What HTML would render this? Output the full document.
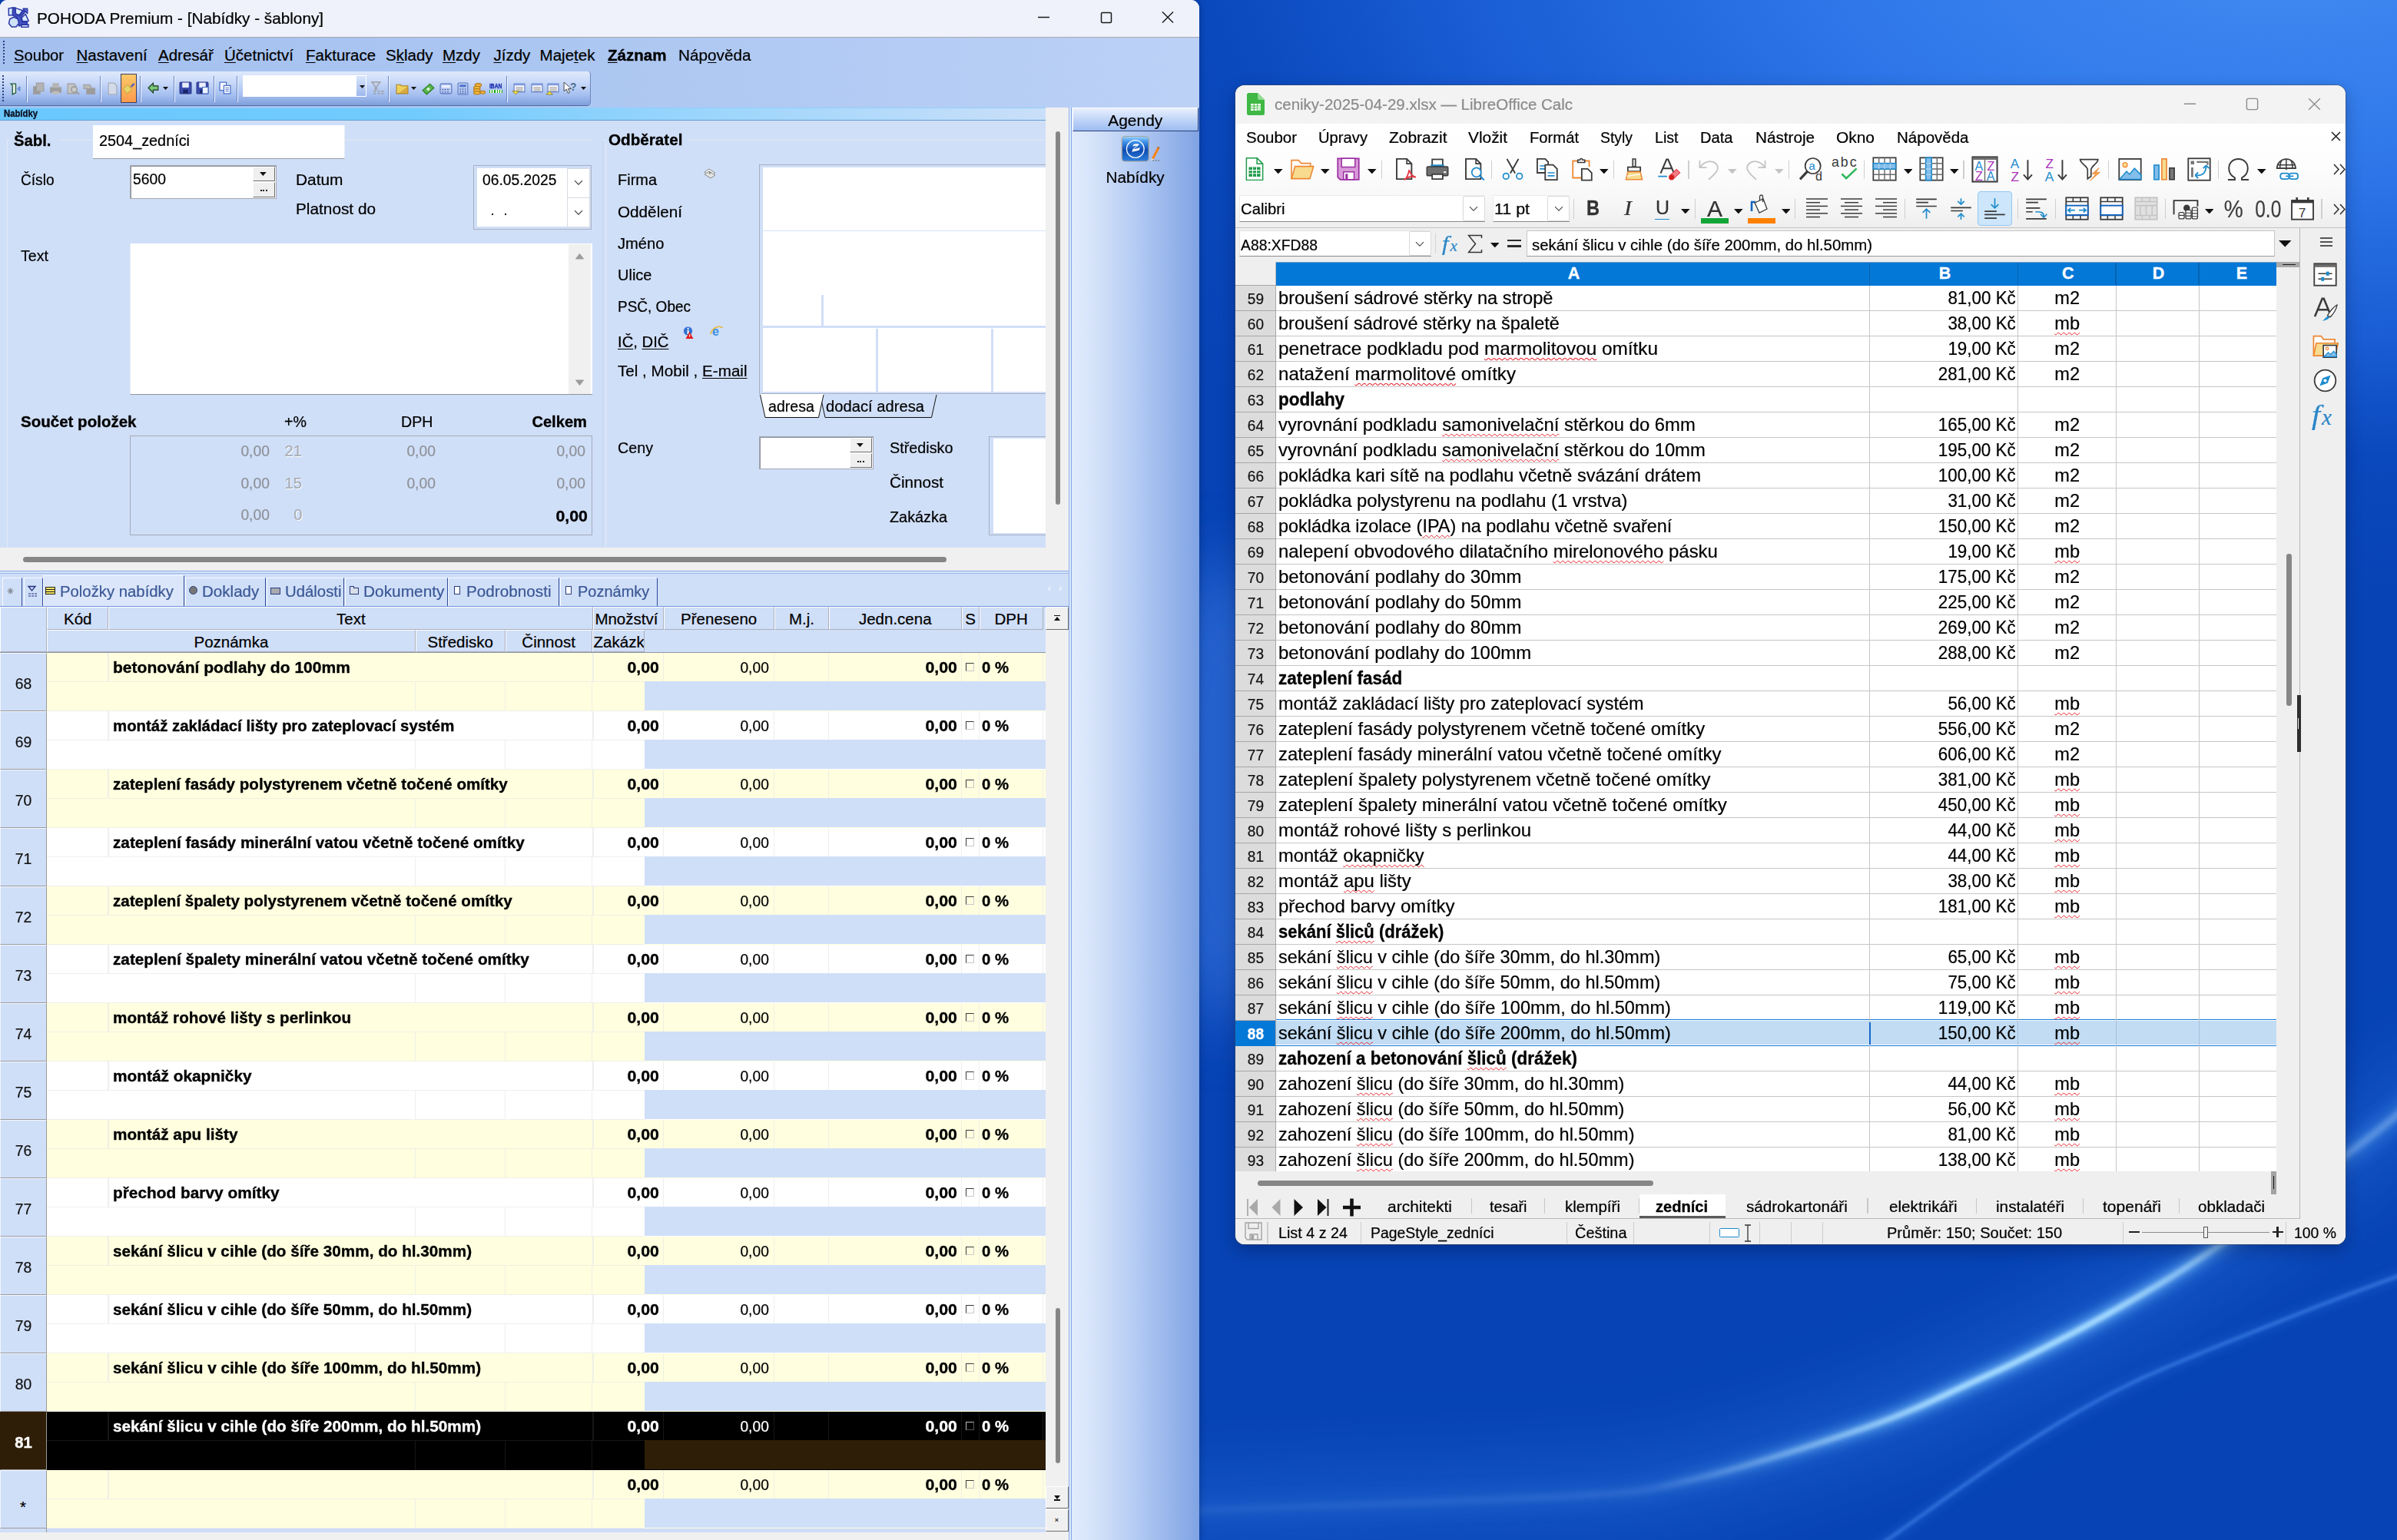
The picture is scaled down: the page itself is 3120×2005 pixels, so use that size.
<!DOCTYPE html><html><head><meta charset="utf-8"><title>screen</title><style>
*{box-sizing:border-box;margin:0;padding:0}
html,body{width:3120px;height:2005px;overflow:hidden}
body{font-family:"Liberation Sans",sans-serif;position:relative;background:#0845b6}
div,span.t,svg{position:absolute}
span.t{white-space:pre;display:block;-webkit-text-stroke:.22px}
.wv{text-decoration:underline wavy #e8202a;text-decoration-thickness:1px;text-underline-offset:3px;text-decoration-skip-ink:none}
u{text-decoration:underline;text-underline-offset:2px;text-decoration-thickness:1.2px}
</style></head><body>
<svg width="3120" height="2005" viewBox="0 0 3120 2005" style="left:0;top:0">
<defs>
<linearGradient id="wg" x1="0" y1="1" x2="1" y2="0" gradientUnits="objectBoundingBox">
<stop offset="0" stop-color="#053fb0"/><stop offset="0.45" stop-color="#0744b6"/><stop offset="0.75" stop-color="#1558cf"/><stop offset="1" stop-color="#3079e8"/></linearGradient>
<filter id="b1" x="-20%" y="-50%" width="140%" height="200%"><feGaussianBlur stdDeviation="12"/></filter>
<filter id="b2" x="-20%" y="-50%" width="140%" height="200%"><feGaussianBlur stdDeviation="4"/></filter>
<filter id="b3" x="-20%" y="-50%" width="140%" height="200%"><feGaussianBlur stdDeviation="45"/></filter>
<linearGradient id="fd" gradientUnits="userSpaceOnUse" x1="1560" y1="0" x2="3120" y2="0"><stop offset="0" stop-color="#fff" stop-opacity=".2"/><stop offset=".35" stop-color="#fff" stop-opacity=".32"/><stop offset=".62" stop-color="#fff" stop-opacity=".85"/><stop offset="1" stop-color="#fff" stop-opacity=".9"/></linearGradient>
<mask id="mk" maskUnits="userSpaceOnUse" x="1500" y="0" width="1620" height="2005"><rect x="1500" y="0" width="1620" height="2005" fill="url(#fd)"/></mask>
<radialGradient id="rg" gradientUnits="userSpaceOnUse" cx="0" cy="0" r="1" gradientTransform="translate(2980 -60) scale(1850 860)">
<stop offset="0" stop-color="#428bf1"/><stop offset=".3" stop-color="#3079eb"/><stop offset=".58" stop-color="#1a5dd4"/><stop offset=".76" stop-color="#0a48bd"/><stop offset="1" stop-color="#0743b5"/></radialGradient>
<linearGradient id="fd2" gradientUnits="userSpaceOnUse" x1="2150" y1="0" x2="3000" y2="0"><stop offset="0" stop-color="#fff" stop-opacity="0"/><stop offset=".45" stop-color="#fff" stop-opacity="1"/><stop offset=".7" stop-color="#fff" stop-opacity="1"/><stop offset="1" stop-color="#fff" stop-opacity="0"/></linearGradient>
<mask id="mk2" maskUnits="userSpaceOnUse" x="1500" y="0" width="1620" height="2005"><rect x="1500" y="0" width="1620" height="2005" fill="url(#fd2)"/></mask>
<filter id="b4" x="-20%" y="-50%" width="140%" height="200%"><feGaussianBlur stdDeviation="2"/></filter>
<filter id="b5" x="-20%" y="-50%" width="140%" height="200%"><feGaussianBlur stdDeviation="7"/></filter>
</defs>
<rect x="1500" y="0" width="1620" height="2005" fill="#0743b5"/>
<rect x="1500" y="0" width="1620" height="1100" fill="url(#rg)"/>
<ellipse cx="1600" cy="1030" rx="130" ry="300" fill="#2d6cd6" opacity="0.75" filter="url(#b3)"/>
<path d="M1400 1972 C1428 1971 1460 1970 1567 1966 C1674 1962 1934 1954 2040 1948 C2146 1942 2135 1942 2200 1927 C2265 1912 2366 1880 2430 1858 C2494 1836 2539 1812 2584 1792 C2629 1772 2661 1755 2699 1735 C2737 1715 2782 1689 2814 1670 C2846 1651 2867 1636 2891 1620 C2915 1604 2928 1595 2960 1572 C2992 1549 3045 1511 3085 1480 C3125 1449 3181 1401 3200 1385" stroke="#2f7ae8" stroke-width="100" fill="none" opacity="0.33" filter="url(#b3)"/>
<g mask="url(#mk)"><path d="M1400 1972 C1428 1971 1460 1970 1567 1966 C1674 1962 1934 1954 2040 1948 C2146 1942 2135 1942 2200 1927 C2265 1912 2366 1880 2430 1858 C2494 1836 2539 1812 2584 1792 C2629 1772 2661 1755 2699 1735 C2737 1715 2782 1689 2814 1670 C2846 1651 2867 1636 2891 1620 C2915 1604 2928 1595 2960 1572 C2992 1549 3045 1511 3085 1480 C3125 1449 3181 1401 3200 1385" stroke="#5aa2f5" stroke-width="16" fill="none" opacity="0.7" filter="url(#b1)"/>
<path d="M1400 1972 C1428 1971 1460 1970 1567 1966 C1674 1962 1934 1954 2040 1948 C2146 1942 2135 1942 2200 1927 C2265 1912 2366 1880 2430 1858 C2494 1836 2539 1812 2584 1792 C2629 1772 2661 1755 2699 1735 C2737 1715 2782 1689 2814 1670 C2846 1651 2867 1636 2891 1620 C2915 1604 2928 1595 2960 1572 C2992 1549 3045 1511 3085 1480 C3125 1449 3181 1401 3200 1385" stroke="#b4dbff" stroke-width="4.500" fill="none" opacity="0.9" filter="url(#b2)"/></g>
<path d="M2400 2045 C2412 2037 2432 2022 2469 1996 C2506 1970 2571 1922 2622 1889 C2673 1856 2718 1828 2776 1800 C2834 1772 2911 1743 2968 1720 C3025 1697 3081 1676 3120 1662 C3159 1648 3187 1639 3200 1634" stroke="#3f86f0" stroke-width="8" fill="none" opacity="0.35" filter="url(#b5)"/>
<path d="M2400 2045 C2412 2037 2432 2022 2469 1996 C2506 1970 2571 1922 2622 1889 C2673 1856 2718 1828 2776 1800 C2834 1772 2911 1743 2968 1720 C3025 1697 3081 1676 3120 1662 C3159 1648 3187 1639 3200 1634" stroke="#4a8df2" stroke-width="3" fill="none" opacity="0.85" filter="url(#b4)"/>
<g mask="url(#mk2)"><path d="M1400 1972 C1428 1971 1460 1970 1567 1966 C1674 1962 1934 1954 2040 1948 C2146 1942 2135 1942 2200 1927 C2265 1912 2366 1880 2430 1858 C2494 1836 2539 1812 2584 1792 C2629 1772 2661 1755 2699 1735 C2737 1715 2782 1689 2814 1670 C2846 1651 2867 1636 2891 1620 C2915 1604 2928 1595 2960 1572 C2992 1549 3045 1511 3085 1480 C3125 1449 3181 1401 3200 1385" stroke="#6ab4fb" stroke-width="16" fill="none" opacity="0.7" filter="url(#b5)"/><path d="M1400 1972 C1428 1971 1460 1970 1567 1966 C1674 1962 1934 1954 2040 1948 C2146 1942 2135 1942 2200 1927 C2265 1912 2366 1880 2430 1858 C2494 1836 2539 1812 2584 1792 C2629 1772 2661 1755 2699 1735 C2737 1715 2782 1689 2814 1670 C2846 1651 2867 1636 2891 1620 C2915 1604 2928 1595 2960 1572 C2992 1549 3045 1511 3085 1480 C3125 1449 3181 1401 3200 1385" stroke="#a6dcff" stroke-width="7" fill="none" opacity="0.95" filter="url(#b4)"/></g>
</svg>
<div id="pohoda" style="left:0;top:0;width:1561px;height:2005px;background:#d0dff8;border-radius:9px 11px 0 0;overflow:hidden;box-shadow:0 0 10px rgba(0,0,20,.3)">
<div style="left:0px;top:0px;width:1561px;height:48px;background:#eff2fa;"></div>
<div style="left:0px;top:48px;width:1561px;height:1px;background:#a6a8ae;"></div>
<svg style="left:9.900px;top:8.600px" width="28" height="27.500" viewBox="0 0 28 27.5">
<path d="M6.500 1h3.500l.8 8.500 4.500 2 5-7 3.500.5-6.500 8 1.500 6.500h6.500v3.200l-7.500.3-3 2L11.500 13 6.500 11z" fill="#4755c2" stroke="#2a38a6" stroke-width="1.600" stroke-linejoin="round"/>
<path d="M20 2.200h5.700v6.300z" fill="#6b76d2" stroke="#2a38a6" stroke-width="1.500" stroke-linejoin="round"/>
<g stroke="#2a38a6" stroke-width="1.500" stroke-linejoin="round">
<path d="M1.200 2L6.600 1.100 6.300 10.400 1.400 11z" fill="#d6e9fc"/>
<path d="M10 1.400L19.600 4.700 14.900 10.600 10.500 9z" fill="#dff0fd"/>
<path d="M23.300 9.300L27.200 18.400 19.300 18.700 18.100 14.200z" fill="#d6e9fc"/>
<polygon points="8.0,13.3 13.2,15.8 14.5,21.5 10.9,26.0 5.1,26.0 1.5,21.5 2.8,15.8" fill="#cfe2fb"/>
<path d="M18.300 23.200L27.200 22.900 26.900 26.200H17.600z" fill="#dff0fd"/>
</g></svg>
<span class="t" style="top:14.35px;font-size:20.5px;line-height:20.5px;left:48.4px;transform:scaleX(1.0106);transform-origin:0 0;">POHODA Premium - [Nabídky - šablony]</span>
<svg style="left:1340px;top:0" width="221" height="48" viewBox="0 0 221 48" fill="none" stroke="#1a1a1a" stroke-width="1.5">
<path d="M11 22.5h15"/><rect x="93.5" y="16.5" width="13" height="13" rx="1.5"/><path d="M173 15.5l14 14M187 15.5l-14 14"/></svg>
<div style="left:0px;top:49px;width:1561px;height:91px;background:linear-gradient(90deg,#a4c0ef 0%,#abc6f1 45%,#bcd1f6 100%);"></div>
<div style="left:4px;top:53px;width:2px;height:31px;background-image:repeating-linear-gradient(180deg,#2a3f78 0 2px,transparent 2px 4px);"></div>
<span class="t" style="top:62.05px;font-size:20.5px;line-height:20.5px;left:18.4px;transform:scaleX(0.9834);transform-origin:0 0;"><u>S</u>oubor</span>
<span class="t" style="top:62.05px;font-size:20.5px;line-height:20.5px;left:99.5px;transform:scaleX(1.0);transform-origin:0 0;"><u>N</u>astavení</span>
<span class="t" style="top:62.05px;font-size:20.5px;line-height:20.5px;left:206px;transform:scaleX(1.0);transform-origin:0 0;"><u>A</u>dresář</span>
<span class="t" style="top:62.05px;font-size:20.5px;line-height:20.5px;left:292px;transform:scaleX(1.0);transform-origin:0 0;"><u>Ú</u>četnictví</span>
<span class="t" style="top:62.05px;font-size:20.5px;line-height:20.5px;left:398px;transform:scaleX(1.0);transform-origin:0 0;"><u>F</u>akturace</span>
<span class="t" style="top:62.05px;font-size:20.5px;line-height:20.5px;left:502px;transform:scaleX(1.0);transform-origin:0 0;">S<u>k</u>lady</span>
<span class="t" style="top:62.05px;font-size:20.5px;line-height:20.5px;left:576px;transform:scaleX(1.0);transform-origin:0 0;"><u>M</u>zdy</span>
<span class="t" style="top:62.05px;font-size:20.5px;line-height:20.5px;left:642.5px;transform:scaleX(1.0);transform-origin:0 0;"><u>J</u>ízdy</span>
<span class="t" style="top:62.05px;font-size:20.5px;line-height:20.5px;left:702.6px;transform:scaleX(1.0);transform-origin:0 0;">Maje<u>t</u>ek</span>
<span class="t" style="top:62.05px;font-size:20.5px;line-height:20.5px;font-weight:700;-webkit-text-stroke:.35px;left:791px;transform:scaleX(1.0023);transform-origin:0 0;"><u>Z</u>áznam</span>
<span class="t" style="top:62.05px;font-size:20.5px;line-height:20.5px;left:883px;transform:scaleX(1.0112);transform-origin:0 0;">Náp<u>o</u>věda</span>
<div style="left:0px;top:93px;width:769px;height:45px;background:linear-gradient(180deg,#dfe9fc 0%,#c6d7f8 35%,#a5bff0 70%,#7f9fdb 100%);border-radius:0 4px 5px 0;border-bottom:1px solid #52699e;border-right:1px solid #6d85bd;"></div>
<div style="left:3px;top:98px;width:2px;height:34px;background-image:repeating-linear-gradient(180deg,#2a3f78 0 2px,transparent 2px 4px);"></div>
<div style="left:33.7px;top:99px;width:1px;height:33px;background:#6a87c4;"></div>
<div style="left:34.7px;top:100px;width:1px;height:33px;background:#f4f8ff;"></div>
<div style="left:130px;top:99px;width:1px;height:33px;background:#6a87c4;"></div>
<div style="left:131px;top:100px;width:1px;height:33px;background:#f4f8ff;"></div>
<div style="left:182px;top:99px;width:1px;height:33px;background:#6a87c4;"></div>
<div style="left:183px;top:100px;width:1px;height:33px;background:#f4f8ff;"></div>
<div style="left:226px;top:99px;width:1px;height:33px;background:#6a87c4;"></div>
<div style="left:227px;top:100px;width:1px;height:33px;background:#f4f8ff;"></div>
<div style="left:278px;top:99px;width:1px;height:33px;background:#6a87c4;"></div>
<div style="left:279px;top:100px;width:1px;height:33px;background:#f4f8ff;"></div>
<div style="left:308px;top:99px;width:1px;height:33px;background:#6a87c4;"></div>
<div style="left:309px;top:100px;width:1px;height:33px;background:#f4f8ff;"></div>
<div style="left:505.3px;top:99px;width:1px;height:33px;background:#6a87c4;"></div>
<div style="left:506.3px;top:100px;width:1px;height:33px;background:#f4f8ff;"></div>
<div style="left:659px;top:99px;width:1px;height:33px;background:#6a87c4;"></div>
<div style="left:660px;top:100px;width:1px;height:33px;background:#f4f8ff;"></div>
<svg style="left:12px;top:107px" width="17" height="17" viewBox="0 0 16 16"><path d="M2 2h6v11l-4 2V4L2 2z" fill="#e8f0e8" stroke="#1f5b3a" stroke-width="1.2"/><path d="M10 8l3-2.5v5z" fill="#8fb8f0" stroke="#3a63b8" stroke-width=".8"/></svg>
<svg style="left:42px;top:107px" width="17" height="17" viewBox="0 0 16 16"><rect x="1" y="5" width="9" height="10" fill="#9c9c9c"/><rect x="5" y="1" width="9" height="10" fill="#b3b3b3" stroke="#9c9c9c"/></svg>
<svg style="left:64px;top:107px" width="17" height="17" viewBox="0 0 16 16"><rect x="1" y="6" width="14" height="7" fill="#9c9c9c"/><rect x="4" y="1" width="8" height="6" fill="#b5b5b5"/><rect x="4" y="11" width="8" height="4" fill="#bdbdbd"/></svg>
<svg style="left:87px;top:107px" width="17" height="17" viewBox="0 0 16 16"><path d="M1 2h8l2 2v10H1z" fill="#c4c4c4" stroke="#9c9c9c"/><circle cx="9" cy="9" r="3.5" fill="#c9c9c9" stroke="#9c9c9c" stroke-width="1.5"/><path d="M11.5 11.5l3.5 3.5" stroke="#9c9c9c" stroke-width="2"/></svg>
<svg style="left:108px;top:107px" width="17" height="17" viewBox="0 0 16 16"><rect x="4" y="7" width="11" height="8" fill="#9c9c9c"/><path d="M1 3h7l2 2v3H1z" fill="#b9b9b9" stroke="#9c9c9c"/></svg>
<svg style="left:139px;top:107px" width="17" height="17" viewBox="0 0 16 16"><path d="M2 1h7l3 3v11H2z" fill="#d4dbe8" stroke="#a9aeb8" stroke-width="1.2"/></svg>
<div style="left:157px;top:96px;width:21px;height:38px;background:linear-gradient(180deg,#fbc96a,#fd9a4c);border:1px solid #3b3f66;"></div>
<svg style="left:159px;top:107px" width="17" height="17" viewBox="0 0 16 16"><path d="M1 8l6-5 5 6-6 5z" fill="#e7d36a" stroke="#b79a2a" stroke-width=".8"/><path d="M10 5l4-4 1.5 1.5-4 4z" fill="#5a62b5"/></svg>
<svg style="left:192px;top:106px" width="17" height="17" viewBox="0 0 16 16"><path d="M1 8l6-6v3.5h6v5H7V14z" fill="#7bc87a" stroke="#18381a" stroke-width="1.1"/></svg>
<svg style="left:212px;top:113px" width="8" height="5" viewBox="0 0 8 5"><path d="M0 0h7L3.5 4z" fill="#111"/></svg>
<svg style="left:233px;top:106px" width="17" height="17" viewBox="0 0 16 16"><rect x="1" y="1" width="14" height="14" rx="1" fill="#3b4db0" stroke="#252f80"/><rect x="4" y="1.5" width="8" height="6" fill="#e9eefc"/><rect x="5" y="10" width="6" height="4.5" fill="#1c2566"/></svg>
<svg style="left:255px;top:106px" width="17" height="17" viewBox="0 0 16 16"><rect x="1" y="1" width="14" height="14" rx="1" fill="#3b4db0" stroke="#252f80"/><rect x="4" y="1.5" width="8" height="6" fill="#e9eefc"/><rect x="5" y="10" width="6" height="4.5" fill="#1c2566"/><rect x="8" y="7" width="7" height="8" fill="#eef3ff" stroke="#3760c0" stroke-width=".8"/></svg>
<svg style="left:285px;top:106px" width="17" height="17" viewBox="0 0 16 16"><rect x="1" y="1" width="8" height="10" fill="#f5f8ff" stroke="#3760c0"/><rect x="6" y="5" width="8" height="10" fill="#f5f8ff" stroke="#3760c0"/><path d="M8 8h4M8 10h4M8 12h4" stroke="#3760c0" stroke-width=".8"/></svg>
<div style="left:316px;top:98px;width:161px;height:28px;background:#fff;border:1px solid #fff;"></div>
<div style="left:464px;top:99px;width:12px;height:26px;background:linear-gradient(180deg,#d9e5fb,#9db8ee);"></div>
<svg style="left:467.5px;top:110.5px" width="8" height="5" viewBox="0 0 8 5"><path d="M0 0h7L3.5 4z" fill="#111"/></svg>
<svg style="left:483px;top:106px" width="17" height="17" viewBox="0 0 16 16"><path d="M1 1h10L7 6v4H5V6z" fill="none" stroke="#9c9c9c" stroke-width="1.3"/><path d="M3 12h3M8 12h3M12.5 12h3M3 15h3M8 15h3M12.5 15h3" stroke="#9c9c9c" stroke-width="1.2"/></svg>
<svg style="left:515px;top:107px" width="17" height="17" viewBox="0 0 16 16"><path d="M1 3h5l1 1.5h8V14H1z" fill="#edd05a" stroke="#a8832a"/><path d="M3 14L15 5v9z" fill="#c98f2f" opacity=".6"/></svg>
<svg style="left:535px;top:113px" width="8" height="5" viewBox="0 0 8 5"><path d="M0 0h7L3.5 4z" fill="#111"/></svg>
<svg style="left:549px;top:107px" width="17" height="17" viewBox="0 0 16 16"><path d="M1 10l9-8 5 5-9 8z" fill="#55b54a" stroke="#2a7a22"/><circle cx="8" cy="8.5" r="2" fill="#d6f2d0"/></svg>
<svg style="left:572px;top:107px" width="17" height="17" viewBox="0 0 16 16"><rect x="1" y="2" width="14" height="12" rx="1.5" fill="#c3d2f3" stroke="#5470c0"/><rect x="3" y="4" width="10" height="2.5" fill="#eef3ff"/><path d="M3 9h10M3 12h10" stroke="#5470c0" stroke-width="1.6" stroke-dasharray="2 1.2"/></svg>
<svg style="left:594px;top:107px" width="17" height="17" viewBox="0 0 16 16"><rect x="2" y="1" width="12" height="14" rx="1" fill="#c3d2f3" stroke="#5470c0"/><rect x="4" y="3" width="8" height="3" fill="#4f74d0"/><path d="M4 8.5h8M4 11h8M4 13.5h8" stroke="#5470c0" stroke-width="1.4" stroke-dasharray="2 1"/></svg>
<svg style="left:615px;top:107px" width="17" height="17" viewBox="0 0 16 16"><ellipse cx="7" cy="3.5" rx="4" ry="2" fill="#f0b83c" stroke="#b5761a"/><ellipse cx="5.5" cy="7" rx="4" ry="2" fill="#f0b83c" stroke="#b5761a"/><ellipse cx="5.5" cy="10" rx="4" ry="2" fill="#f0b83c" stroke="#b5761a"/><ellipse cx="5.5" cy="13" rx="4" ry="2" fill="#f0b83c" stroke="#b5761a"/><ellipse cx="12.5" cy="12.5" rx="3" ry="1.8" fill="#f0b83c" stroke="#b5761a"/></svg>
<span class="t" style="top:108.22px;font-size:8.6px;line-height:8.6px;font-weight:700;-webkit-text-stroke:.35px;color:#1b2fb0;left:636.5px;transform:scaleX(0.7849);transform-origin:0 0;">IBAN</span>
<div style="left:637px;top:117px;width:16.5px;height:4px;background:#19a51e;background-image:repeating-linear-gradient(90deg,transparent 0 1px,#dff5d8 1px 3px,transparent 3px 3.3px);"></div>
<svg style="left:667px;top:107px" width="17" height="17" viewBox="0 0 16 16"><rect x="2" y="2" width="13" height="10" fill="#fff" stroke="#5470c0"/><rect x="2" y="2" width="13" height="2" fill="#7f9be0"/><path d="M4 6.5h9M4 8.5h9M4 10.5h9" stroke="#777" stroke-width=".8"/><path d="M0 11h8l-4 4z" fill="#f3e24a" stroke="#7a6a1a" stroke-width=".7"/></svg>
<svg style="left:689.5px;top:107px" width="17" height="17" viewBox="0 0 16 16"><rect x="2" y="2" width="13" height="10" fill="#fff" stroke="#5470c0"/><rect x="2" y="2" width="13" height="2" fill="#7f9be0"/><path d="M4 6.5h9M4 8.5h9M4 10.5h9" stroke="#777" stroke-width=".8"/></svg>
<svg style="left:711px;top:107px" width="17" height="17" viewBox="0 0 16 16"><rect x="2" y="2" width="13" height="10" fill="#fff" stroke="#5470c0"/><rect x="2" y="2" width="13" height="2" fill="#7f9be0"/><path d="M4 6.5h9M4 8.5h9M4 10.5h9" stroke="#777" stroke-width=".8"/><path d="M0 15h8l-4-4z" fill="#f3e24a" stroke="#7a6a1a" stroke-width=".7"/></svg>
<svg style="left:733px;top:106px" width="17" height="17" viewBox="0 0 16 16"><path d="M1 1v11l3-2.5 2 5 2-1-2-4.5h4z" fill="#fff" stroke="#444" stroke-width=".9"/><text x="8.5" y="11" font-family="Liberation Sans" font-weight="700" font-size="13" fill="#4a6f8f">?</text></svg>
<svg style="left:755.5px;top:113px" width="8" height="5" viewBox="0 0 8 5"><path d="M0 0h7L3.5 4z" fill="#111"/></svg>
<div style="left:0px;top:140px;width:1361px;height:16.5px;background:linear-gradient(90deg,#6ac7fd 0%,#72cbfd 40%,#9fd6fc 70%,#cadff9 100%);border-bottom:1px solid #5e9fd0;border-top:1px solid #8fd0fa;"></div>
<span class="t" style="top:142.13px;font-size:12.6px;line-height:12.6px;font-weight:700;-webkit-text-stroke:.35px;color:#0a0f1f;left:5.3px;transform:scaleX(0.8977);transform-origin:0 0;">Nabídky</span>
<div style="left:9px;top:181.5px;width:762px;height:1px;background:#e3e9f6;"></div>
<div style="left:9px;top:182.5px;width:1px;height:531px;background:#e3e9f6;"></div>
<div style="left:783px;top:181.5px;width:578px;height:1px;background:#e3e9f6;"></div>
<div style="left:783.5px;top:182.5px;width:1px;height:531px;background:#c9d5ee;"></div>
<div style="left:788px;top:182.5px;width:1px;height:531px;background:#e3e9f6;"></div>
<div style="left:12px;top:170px;width:64px;height:24px;background:#d0dff8;"></div>
<div style="left:789px;top:170px;width:106px;height:24px;background:#d0dff8;"></div>
<span class="t" style="top:172.65px;font-size:20.5px;line-height:20.5px;font-weight:700;-webkit-text-stroke:.35px;left:18px;transform:scaleX(0.9901);transform-origin:0 0;">Šabl.</span>
<div style="left:120.8px;top:163px;width:328.5px;height:43.5px;background:#fff;border-bottom:1.5px solid #9aa0ad;border-right:1px solid #e8ecf5;"></div>
<span class="t" style="top:172.65px;font-size:20.5px;line-height:20.5px;left:129px;transform:scaleX(0.9676);transform-origin:0 0;">2504_zedníci</span>
<span class="t" style="top:223.65px;font-size:20.5px;line-height:20.5px;left:27px;transform:scaleX(0.9314);transform-origin:0 0;">Číslo</span>
<div style="left:168.5px;top:214.6px;width:191px;height:44px;background:#fff;border:1.300px solid #a4a8b2;box-shadow:inset 1px 1px 0 #8d929c;"></div><div style="left:328.5px;top:216.6px;width:29px;height:19.5px;background:#efefef;border:1px solid #fff;border-right-color:#6e6e6e;border-bottom-color:#6e6e6e;"></div><svg style="left:338px;top:223.85px" width="10.0" height="6.25" viewBox="0 0 8 5"><path d="M0 0h7L3.5 4z" fill="#111"/></svg><div style="left:328.5px;top:237.1px;width:29px;height:19.5px;background:#efefef;border:1px solid #fff;border-right-color:#6e6e6e;border-bottom-color:#6e6e6e;"></div><div style="left:338.5px;top:246.85px;width:2px;height:2px;background:#111;"></div><div style="left:342px;top:246.85px;width:2px;height:2px;background:#111;"></div><div style="left:345.5px;top:246.85px;width:2px;height:2px;background:#111;"></div>
<span class="t" style="top:222.65px;font-size:20.5px;line-height:20.5px;left:173px;transform:scaleX(0.943);transform-origin:0 0;">5600</span>
<span class="t" style="top:223.65px;font-size:20.5px;line-height:20.5px;left:385px;transform:scaleX(1.0186);transform-origin:0 0;">Datum</span>
<span class="t" style="top:262.35px;font-size:20.5px;line-height:20.5px;left:385px;transform:scaleX(1.014);transform-origin:0 0;">Platnost do</span>
<div style="left:615.8px;top:214.6px;width:154.6px;height:84.6px;border:1px solid #a8afc0;"></div>
<div style="left:620.8px;top:218.6px;width:146.2px;height:76.4px;background:#fff;"></div>
<div style="left:738px;top:218.6px;width:1px;height:76.4px;background:#d6dae2;"></div>
<div style="left:738px;top:256.5px;width:29px;height:1px;background:#d6dae2;"></div>
<div style="left:766.5px;top:218.6px;width:1px;height:76.4px;background:#d6dae2;"></div>
<div style="left:738px;top:218.6px;width:29px;height:1px;background:#d6dae2;"></div>
<div style="left:738px;top:294.5px;width:29px;height:1px;background:#d6dae2;"></div>
<svg style="left:746.5px;top:234px" width="12" height="7.199999999999999" viewBox="0 0 12 7" fill="none" stroke="#444" stroke-width="1.3"><path d="M1 1l5 5 5-5"/></svg>
<svg style="left:746.5px;top:272.5px" width="12" height="7.199999999999999" viewBox="0 0 12 7" fill="none" stroke="#444" stroke-width="1.3"><path d="M1 1l5 5 5-5"/></svg>
<span class="t" style="top:223.65px;font-size:20.5px;line-height:20.5px;left:627.5px;transform:scaleX(0.9406);transform-origin:0 0;">06.05.2025</span>
<div style="left:639.5px;top:277.5px;width:2.6px;height:2.6px;background:#111;"></div>
<div style="left:656.8px;top:277.5px;width:2.6px;height:2.6px;background:#111;"></div>
<span class="t" style="top:322.65px;font-size:20.5px;line-height:20.5px;left:27.4px;transform:scaleX(0.9576);transform-origin:0 0;">Text</span>
<div style="left:168.5px;top:316.7px;width:602px;height:197.6px;background:#fff;border-bottom:1.5px solid #8e949e;border-left:1px solid #e4e9f4;"></div>
<div style="left:740px;top:318px;width:29.4px;height:195px;background:#f0f0f0;"></div>
<svg style="left:748px;top:329px" width="13" height="9" viewBox="0 0 13 9"><path d="M1.5 8L6.5 1.5 11.5 8z" fill="#9b9b9b" stroke="#9b9b9b" stroke-linejoin="round"/></svg>
<svg style="left:748px;top:494px" width="13" height="9" viewBox="0 0 13 9"><path d="M1.5 1L6.5 7.5 11.5 1z" fill="#9b9b9b" stroke="#9b9b9b" stroke-linejoin="round"/></svg>
<span class="t" style="top:539.05px;font-size:20.5px;line-height:20.5px;font-weight:700;-webkit-text-stroke:.35px;left:27px;transform:scaleX(1.001);transform-origin:0 0;">Součet položek</span>
<span class="t" style="top:539.05px;font-size:20.5px;line-height:20.5px;left:369.5px;transform:scaleX(0.9602);transform-origin:0 0;">+%</span>
<span class="t" style="top:539.05px;font-size:20.5px;line-height:20.5px;left:522px;transform:scaleX(0.9588);transform-origin:0 0;">DPH</span>
<span class="t" style="top:539.05px;font-size:20.5px;line-height:20.5px;font-weight:700;-webkit-text-stroke:.35px;left:691.47px;transform:scaleX(0.9804);transform-origin:100% 0;">Celkem</span>
<div style="left:168.5px;top:567.4px;width:602px;height:130px;border:1px solid #a3a9b8;"></div>
<span class="t" style="top:577.45px;font-size:20.5px;line-height:20.5px;color:#8e9299;left:310.61px;transform:scaleX(0.94);transform-origin:100% 0;">0,00</span>
<span class="t" style="top:618.65px;font-size:20.5px;line-height:20.5px;color:#8e9299;left:310.61px;transform:scaleX(0.94);transform-origin:100% 0;">0,00</span>
<span class="t" style="top:659.85px;font-size:20.5px;line-height:20.5px;color:#8e9299;left:310.61px;transform:scaleX(0.94);transform-origin:100% 0;">0,00</span>
<span class="t" style="top:577.45px;font-size:20.5px;line-height:20.5px;color:#8e9299;left:526.51px;transform:scaleX(0.94);transform-origin:100% 0;">0,00</span>
<span class="t" style="top:577.45px;font-size:20.5px;line-height:20.5px;color:#8e9299;left:721.81px;transform:scaleX(0.94);transform-origin:100% 0;">0,00</span>
<span class="t" style="top:618.65px;font-size:20.5px;line-height:20.5px;color:#8e9299;left:526.51px;transform:scaleX(0.94);transform-origin:100% 0;">0,00</span>
<span class="t" style="top:618.65px;font-size:20.5px;line-height:20.5px;color:#8e9299;left:721.81px;transform:scaleX(0.94);transform-origin:100% 0;">0,00</span>
<span class="t" style="top:577.45px;font-size:20.5px;line-height:20.5px;color:#a8acb3;left:370.2px;transform:scaleX(0.98);transform-origin:100% 0;text-shadow:1px 1px 0 #fff;">21</span>
<span class="t" style="top:618.65px;font-size:20.5px;line-height:20.5px;color:#a8acb3;left:370.2px;transform:scaleX(0.98);transform-origin:100% 0;text-shadow:1px 1px 0 #fff;">15</span>
<span class="t" style="top:659.85px;font-size:20.5px;line-height:20.5px;color:#a8acb3;left:381.6px;transform:scaleX(0.98);transform-origin:100% 0;text-shadow:1px 1px 0 #fff;">0</span>
<span class="t" style="top:662.15px;font-size:20.5px;line-height:20.5px;font-weight:700;-webkit-text-stroke:.35px;left:724.51px;transform:scaleX(1.0402);transform-origin:100% 0;">0,00</span>
<span class="t" style="top:172.15px;font-size:20.5px;line-height:20.5px;font-weight:700;-webkit-text-stroke:.35px;left:792.2px;transform:scaleX(1.0075);transform-origin:0 0;">Odběratel</span>
<span class="t" style="top:224.45px;font-size:20.5px;line-height:20.5px;left:803.8px;transform:scaleX(0.9737);transform-origin:0 0;">Firma</span>
<span class="t" style="top:265.65px;font-size:20.5px;line-height:20.5px;left:803.8px;transform:scaleX(1.0097);transform-origin:0 0;">Oddělení</span>
<span class="t" style="top:307.05px;font-size:20.5px;line-height:20.5px;left:803.8px;transform:scaleX(0.9833);transform-origin:0 0;">Jméno</span>
<span class="t" style="top:348.45px;font-size:20.5px;line-height:20.5px;left:803.8px;transform:scaleX(0.9766);transform-origin:0 0;">Ulice</span>
<span class="t" style="top:389.45px;font-size:20.5px;line-height:20.5px;left:803.8px;transform:scaleX(0.9265);transform-origin:0 0;">PSČ, Obec</span>
<span class="t" style="top:434.55px;font-size:20.5px;line-height:20.5px;left:804.4px;transform:scaleX(0.9897);transform-origin:0 0;"><u>IČ</u>, <u>DIČ</u></span>
<span class="t" style="top:472.95px;font-size:20.5px;line-height:20.5px;left:804.4px;transform:scaleX(1.0063);transform-origin:0 0;">Tel , Mobil , <u>E-mail</u></span>
<svg style="left:914.500px;top:216.500px" width="18" height="18" viewBox="0 0 18 18"><path d="M2 7l6-4 8 5-6 4z" fill="#f3f3f3" stroke="#8a8a8a"/><path d="M2 10l6-4 8 5-6 4z" fill="#e2e2e2" stroke="#8a8a8a"/><circle cx="9" cy="8" r="1.5" fill="#8a8a8a"/></svg>
<svg style="left:888px;top:424px" width="18" height="18" viewBox="0 0 18 18"><circle cx="7.5" cy="7" r="6" fill="#2f6fd0" stroke="#c8d8f5"/><rect x="6.6" y="5.5" width="2" height="5.5" fill="#fff"/><rect x="6.6" y="2.8" width="2" height="1.8" fill="#fff"/><path d="M4.5 17l5-9 5 9z" fill="#e21a1a"/><rect x="9" y="11.5" width="1.2" height="3" fill="#fff"/></svg>
<svg style="left:924px;top:423px" width="18" height="18" viewBox="0 0 18 18"><text x="3" y="14" font-family="Liberation Sans" font-weight="700" font-size="16" fill="#3a8ee0">e</text><path d="M1 12C2 4 12 0 17 4" fill="none" stroke="#e8b93a" stroke-width="1.6"/></svg>
<div style="left:988px;top:214.4px;width:380px;height:299px;border:1px solid #a8afc0;"></div>
<div style="left:992.6px;top:218px;width:372px;height:292.4px;background:#fff;"></div>
<div style="left:992.6px;top:300px;width:372px;height:1.2px;background:#d5e2f8;"></div>
<div style="left:1068.6px;top:383.5px;width:3px;height:41px;background:#d0dff8;"></div>
<div style="left:992.6px;top:424.3px;width:372px;height:3.2px;background:#d0dff8;"></div>
<div style="left:1140px;top:427.5px;width:3px;height:83px;background:#d0dff8;"></div>
<div style="left:1290px;top:427.5px;width:3px;height:83px;background:#d0dff8;"></div>
<svg style="left:986px;top:512px" width="236" height="34" viewBox="0 0 236 34">
<path d="M81.5 2L88 31.5H226.5L233 2" fill="#d0dff8" stroke="#111" stroke-width="1"/>
<path d="M3.5 1L10 31.5H79.500L86 1z" fill="#fff" stroke="none"/><path d="M3.500 2L10 31.5H79.500L86 2" fill="none" stroke="#111" stroke-width="1"/></svg>
<span class="t" style="top:518.95px;font-size:20.5px;line-height:20.5px;left:999.6px;transform:scaleX(0.9573);transform-origin:0 0;">adresa</span>
<span class="t" style="top:518.95px;font-size:20.5px;line-height:20.5px;left:1074.7px;transform:scaleX(0.9853);transform-origin:0 0;">dodací adresa</span>
<span class="t" style="top:573.05px;font-size:20.5px;line-height:20.5px;left:804.4px;transform:scaleX(0.9612);transform-origin:0 0;">Ceny</span>
<div style="left:988px;top:567.7px;width:148.5px;height:43.7px;background:#fff;border:1.300px solid #a4a8b2;box-shadow:inset 1px 1px 0 #8d929c;"></div><div style="left:1105.5px;top:569.7px;width:29px;height:19.35px;background:#efefef;border:1px solid #fff;border-right-color:#6e6e6e;border-bottom-color:#6e6e6e;"></div><svg style="left:1115px;top:576.88px" width="10.0" height="6.25" viewBox="0 0 8 5"><path d="M0 0h7L3.5 4z" fill="#111"/></svg><div style="left:1105.5px;top:590.05px;width:29px;height:19.35px;background:#efefef;border:1px solid #fff;border-right-color:#6e6e6e;border-bottom-color:#6e6e6e;"></div><div style="left:1115.5px;top:599.73px;width:2px;height:2px;background:#111;"></div><div style="left:1119px;top:599.73px;width:2px;height:2px;background:#111;"></div><div style="left:1122.5px;top:599.73px;width:2px;height:2px;background:#111;"></div>
<span class="t" style="top:573.05px;font-size:20.5px;line-height:20.5px;left:1158.2px;transform:scaleX(0.9655);transform-origin:0 0;">Středisko</span>
<span class="t" style="top:618.15px;font-size:20.5px;line-height:20.5px;left:1158.2px;transform:scaleX(1.0071);transform-origin:0 0;">Činnost</span>
<span class="t" style="top:663.15px;font-size:20.5px;line-height:20.5px;left:1158.2px;transform:scaleX(0.9681);transform-origin:0 0;">Zakázka</span>
<div style="left:1287.4px;top:567.7px;width:90px;height:129.5px;border:1px solid #a8afc0;"></div>
<div style="left:1293px;top:571px;width:80px;height:123px;background:#fff;"></div>
<div style="left:1360.8px;top:140px;width:30px;height:603px;background:#f0f0f0;"></div>
<div style="left:1373.5px;top:170.6px;width:6.5px;height:486.6px;background:#868686;border-radius:3.5px;"></div>
<div style="left:0px;top:713px;width:1361px;height:30px;background:#f0f0f0;"></div>
<div style="left:30px;top:725px;width:1201.6px;height:7px;background:#868686;border-radius:3.5px;"></div>
<div style="left:0px;top:743px;width:1391px;height:1.2px;background:#7ea4e6;"></div>
<div style="left:0px;top:744.2px;width:1391px;height:1.3px;background:#e6eefc;"></div>
<div style="left:0px;top:745.5px;width:1391px;height:1px;background:#9bb8ea;"></div>
<div style="left:1390.8px;top:140px;width:1px;height:1865px;background:#8db0ea;"></div>
<div style="left:1391.8px;top:140px;width:2.2px;height:1865px;background:#dfe9fb;"></div>
<div style="left:1394px;top:140px;width:1.3px;height:1865px;background:#7ea4e6;"></div>
<div style="left:1395.3px;top:140px;width:166px;height:1865px;background:linear-gradient(90deg,#e1ebfc 0%,#d3e1f9 20%,#b4cbf3 50%,#94b3ea 80%,#80a3e3 100%);"></div>
<div style="left:1396px;top:140px;width:164px;height:31px;background:linear-gradient(180deg,#e9f0fd 0%,#c5d8f8 45%,#9dbcf1 100%);border:1.500px solid #fff;border-right-color:#2c3f78;border-bottom-color:#2c3f78;"></div>
<span class="t" style="top:147.35px;font-size:20.5px;line-height:20.5px;left:1442.74px;transform:scaleX(1.0212);transform-origin:50% 0;">Agendy</span>
<svg style="left:1459px;top:176px" width="56" height="36" viewBox="0 0 56 36">
<defs><linearGradient id="ag" x1="0" y1="0" x2="0" y2="1"><stop offset="0" stop-color="#9fd6ff"/><stop offset=".22" stop-color="#3f93ea"/><stop offset=".55" stop-color="#0d4db3"/><stop offset="1" stop-color="#2f7fdc"/></linearGradient></defs>
<rect x="1.200" y="1.500" width="35" height="32.500" rx="4" fill="url(#ag)" stroke="#a9a69c" stroke-width="1.200"/>
<circle cx="18.800" cy="18" r="11.300" fill="none" stroke="#fff" stroke-width="1.300"/>
<path d="M16 12.500c2-1.500 6-1.800 8-.5l-7.500 6.500 8-2.200c.5 1-.5 2.800-1 3.500l-9 2c0-1.500.5-3 1.500-4l5-4.300-5.500 1z" fill="#fff"/>
<path d="M40 30l7-13.500 2.800 1.500-7 13.500z" fill="#f5841f"/><path d="M47 16.500l1-1.800 2.800 1.500-1 1.800z" fill="#c96a1a"/><path d="M40 30l2.800 1.500-3.300 1.700z" fill="#f3e6cf"/>
<path d="M41 33h9" stroke="#5a6a5a" stroke-width="1" stroke-dasharray="2 1.500"/></svg>
<span class="t" style="top:220.95px;font-size:20.5px;line-height:20.5px;left:1439.9px;transform:scaleX(1.0106);transform-origin:50% 0;">Nabídky</span>
<div style="left:3.3px;top:751.5px;width:25.5px;height:37.5px;background:#d0dff8;border-left:1px solid #f6f9ff;border-top:1px solid #f6f9ff;border-right:1.6px solid #2b4a9c;"></div>
<div style="left:30.7px;top:751.5px;width:25px;height:37.5px;background:#d0dff8;border-left:1px solid #f6f9ff;border-top:1px solid #f6f9ff;border-right:1.6px solid #2b4a9c;"></div>
<div style="left:56px;top:749px;width:184px;height:40px;background:#dbe6fa;border-left:1px solid #f6f9ff;border-top:1px solid #f6f9ff;border-right:1.6px solid #2b4a9c;"></div>
<div style="left:240.6px;top:751.5px;width:105.9px;height:37.5px;background:#d0dff8;border-left:1px solid #f6f9ff;border-top:1px solid #f6f9ff;border-right:1.6px solid #2b4a9c;"></div>
<div style="left:347px;top:751.5px;width:101.3px;height:37.5px;background:#d0dff8;border-left:1px solid #f6f9ff;border-top:1px solid #f6f9ff;border-right:1.6px solid #2b4a9c;"></div>
<div style="left:449px;top:751.5px;width:133.5px;height:37.5px;background:#d0dff8;border-left:1px solid #f6f9ff;border-top:1px solid #f6f9ff;border-right:1.6px solid #2b4a9c;"></div>
<div style="left:583.3px;top:751.5px;width:144.4px;height:37.5px;background:#d0dff8;border-left:1px solid #f6f9ff;border-top:1px solid #f6f9ff;border-right:1.6px solid #2b4a9c;"></div>
<div style="left:728.5px;top:751.5px;width:127px;height:37.5px;background:#d0dff8;border-left:1px solid #f6f9ff;border-top:1px solid #f6f9ff;border-right:1.6px solid #2b4a9c;"></div>
<svg style="left:9.300px;top:765.200px" width="9" height="9" viewBox="0 0 9 9" stroke="#868b96" stroke-width="1.200"><path d="M4.500 .500v8M.500 4.500h8M1.700 1.700l5.600 5.600M7.300 1.700L1.700 7.300"/></svg>
<svg style="left:35px;top:762px" width="15" height="15" viewBox="0 0 15 15" fill="none" stroke="#1d2f7a" stroke-width="1.3"><path d="M2 1.5h9L6.5 7z"/><path d="M2 11h3M6 11h3M10 11h3M2 14h3M6 14h3M10 14h3" stroke-width="1.2"/></svg>
<span class="t" style="top:760.05px;font-size:20.5px;line-height:20.5px;color:#3b5896;left:78.4px;transform:scaleX(0.9908);transform-origin:0 0;">Položky nabídky</span>
<div style="left:59.4px;top:764px;width:13px;height:10px;background:#f0e060;border:1px solid #222;background-image:repeating-linear-gradient(180deg,transparent 0 2px,#222 2px 3px);"></div>
<span class="t" style="top:760.05px;font-size:20.5px;line-height:20.5px;color:#3b5896;left:263px;transform:scaleX(1.0032);transform-origin:0 0;">Doklady</span>
<div style="left:246px;top:763px;width:11px;height:11px;background:#777;border-radius:50%;border:1.5px solid #2a3c7c;"></div>
<span class="t" style="top:760.05px;font-size:20.5px;line-height:20.5px;color:#3b5896;left:370.5px;transform:scaleX(0.9924);transform-origin:0 0;">Události</span>
<div style="left:351.5px;top:765px;width:13px;height:9px;background:#a8aab0;border:1px solid #2a3c7c;"></div>
<span class="t" style="top:760.05px;font-size:20.5px;line-height:20.5px;color:#3b5896;left:473px;transform:scaleX(1.0176);transform-origin:0 0;">Dokumenty</span>
<div style="left:455px;top:765px;width:12px;height:9px;background:#d8dde8;border:1px solid #2a3c7c;"></div><div style="left:455px;top:763px;width:6px;height:3px;background:#d8dde8;border:1px solid #2a3c7c;border-bottom:none;"></div>
<span class="t" style="top:760.05px;font-size:20.5px;line-height:20.5px;color:#3b5896;left:606.8px;transform:scaleX(1.0101);transform-origin:0 0;">Podrobnosti</span>
<div style="left:590.8px;top:763px;width:8px;height:11px;background:#fff;border:1px solid #2a3c7c;"></div>
<span class="t" style="top:760.05px;font-size:20.5px;line-height:20.5px;color:#3b5896;left:751.7px;transform:scaleX(0.9749);transform-origin:0 0;">Poznámky</span>
<div style="left:735.7px;top:763px;width:8px;height:11px;background:#fff;border:1px solid #2a3c7c;"></div>
<svg style="left:1361px;top:762px" width="26" height="10" viewBox="0 0 26 10"><path d="M6 1v7L2 4.500z" fill="#e6edfb"/><path d="M18 1v7l4-3.500z" fill="#e6edfb"/></svg>
<div style="left:0px;top:789px;width:1391px;height:1.2px;background:#6f93d8;"></div>
<div style="left:0px;top:790.2px;width:1361px;height:59.3px;background:#d0dff8;"></div>
<div style="left:0px;top:790.2px;width:60.6px;height:59.3px;background:#d0dff8;border-left:1.3px solid #fff;border-top:1.3px solid #fff;border-right:1.3px solid #a9afbc;border-bottom:1.3px solid #a9afbc;overflow:hidden;"></div>
<div style="left:61px;top:790.2px;width:80.4px;height:29.4px;background:#d0dff8;border-left:1.3px solid #fff;border-top:1.3px solid #fff;border-right:1.3px solid #a9afbc;border-bottom:1.3px solid #a9afbc;overflow:hidden;"><span class="t" style="top:4.85px;font-size:20.5px;line-height:20.5px;left:20.96px;transform:scaleX(1.0);transform-origin:50% 0;">Kód</span></div>
<div style="left:141.4px;top:790.2px;width:631px;height:29.4px;background:#d0dff8;border-left:1.3px solid #fff;border-top:1.3px solid #fff;border-right:1.3px solid #a9afbc;border-bottom:1.3px solid #a9afbc;overflow:hidden;"><span class="t" style="top:4.85px;font-size:20.5px;line-height:20.5px;left:295.7px;transform:scaleX(1.0);transform-origin:50% 0;">Text</span></div>
<div style="left:772.4px;top:790.2px;width:91.2px;height:29.4px;background:#d0dff8;border-left:1.3px solid #fff;border-top:1.3px solid #fff;border-right:1.3px solid #a9afbc;border-bottom:1.3px solid #a9afbc;overflow:hidden;"><span class="t" style="top:4.85px;font-size:20.5px;line-height:20.5px;left:1px;transform:scaleX(1.0);transform-origin:0 0;">Množství</span></div>
<div style="left:863.6px;top:790.2px;width:144.2px;height:29.4px;background:#d0dff8;border-left:1.3px solid #fff;border-top:1.3px solid #fff;border-right:1.3px solid #a9afbc;border-bottom:1.3px solid #a9afbc;overflow:hidden;"><span class="t" style="top:4.85px;font-size:20.5px;line-height:20.5px;left:21.53px;transform:scaleX(1.0);transform-origin:50% 0;">Přeneseno</span></div>
<div style="left:1007.8px;top:790.2px;width:71.2px;height:29.4px;background:#d0dff8;border-left:1.3px solid #fff;border-top:1.3px solid #fff;border-right:1.3px solid #a9afbc;border-bottom:1.3px solid #a9afbc;overflow:hidden;"><span class="t" style="top:4.85px;font-size:20.5px;line-height:20.5px;left:18.09px;transform:scaleX(1.0);transform-origin:50% 0;">M.j.</span></div>
<div style="left:1079px;top:790.2px;width:172.5px;height:29.4px;background:#d0dff8;border-left:1.3px solid #fff;border-top:1.3px solid #fff;border-right:1.3px solid #a9afbc;border-bottom:1.3px solid #a9afbc;overflow:hidden;"><span class="t" style="top:4.85px;font-size:20.5px;line-height:20.5px;left:37.95px;transform:scaleX(1.0);transform-origin:50% 0;">Jedn.cena</span></div>
<div style="left:1251.5px;top:790.2px;width:23.3px;height:29.4px;background:#d0dff8;border-left:1.3px solid #fff;border-top:1.3px solid #fff;border-right:1.3px solid #a9afbc;border-bottom:1.3px solid #a9afbc;overflow:hidden;"><span class="t" style="top:4.85px;font-size:20.5px;line-height:20.5px;left:3.81px;transform:scaleX(1.0);transform-origin:50% 0;">S</span></div>
<div style="left:1274.8px;top:790.2px;width:82.8px;height:29.4px;background:#d0dff8;border-left:1.3px solid #fff;border-top:1.3px solid #fff;border-right:1.3px solid #a9afbc;border-bottom:1.3px solid #a9afbc;overflow:hidden;"><span class="t" style="top:4.85px;font-size:20.5px;line-height:20.5px;left:18.76px;transform:scaleX(1.0);transform-origin:50% 0;">DPH</span></div>
<div style="left:61px;top:819.6px;width:479.8px;height:29.9px;background:#d0dff8;border-left:1.3px solid #fff;border-top:1.3px solid #fff;border-right:1.3px solid #a9afbc;border-bottom:1.3px solid #a9afbc;overflow:hidden;"><span class="t" style="top:5.35px;font-size:20.5px;line-height:20.5px;left:190.48px;transform:scaleX(1.0);transform-origin:50% 0;">Poznámka</span></div>
<div style="left:540.8px;top:819.6px;width:116.8px;height:29.9px;background:#d0dff8;border-left:1.3px solid #fff;border-top:1.3px solid #fff;border-right:1.3px solid #a9afbc;border-bottom:1.3px solid #a9afbc;overflow:hidden;"><span class="t" style="top:5.35px;font-size:20.5px;line-height:20.5px;left:14.68px;transform:scaleX(1.0);transform-origin:50% 0;">Středisko</span></div>
<div style="left:657.6px;top:819.6px;width:113px;height:29.9px;background:#d0dff8;border-left:1.3px solid #fff;border-top:1.3px solid #fff;border-right:1.3px solid #a9afbc;border-bottom:1.3px solid #a9afbc;overflow:hidden;"><span class="t" style="top:5.35px;font-size:20.5px;line-height:20.5px;left:20.75px;transform:scaleX(1.0);transform-origin:50% 0;">Činnost</span></div>
<div style="left:770.6px;top:819.6px;width:68px;height:29.9px;background:#d0dff8;border-left:1.3px solid #fff;border-top:1.3px solid #fff;border-right:1.3px solid #a9afbc;border-bottom:1.3px solid #a9afbc;overflow:hidden;"><span class="t" style="top:5.35px;font-size:20.5px;line-height:20.5px;left:1px;transform:scaleX(1.0);transform-origin:0 0;">Zakázka</span></div>
<div style="left:0px;top:848.5px;width:1361px;height:1.3px;background:#8f96a6;"></div>
<div style="left:61px;top:849.5px;width:1300px;height:76px;overflow:hidden;"><div style="left:0px;top:0px;width:1300px;height:76px;background:#ffffdf;"></div><div style="left:777.6px;top:37.6px;width:522.4px;height:38.4px;background:#d0dff8;"></div><div style="left:0px;top:37.3px;width:777.6px;height:1.2px;background:#efefe6;"></div><div style="left:79.4px;top:0px;width:1.3px;height:37px;background:#efefe6;"></div><div style="left:710.4px;top:0px;width:1.3px;height:37px;background:#efefe6;"></div><div style="left:801.6px;top:0px;width:1.3px;height:37px;background:#efefe6;"></div><div style="left:945.8px;top:0px;width:1.3px;height:37px;background:#efefe6;"></div><div style="left:1017px;top:0px;width:1.3px;height:37px;background:#efefe6;"></div><div style="left:1189.5px;top:0px;width:1.3px;height:37px;background:#efefe6;"></div><div style="left:1212.8px;top:0px;width:1.3px;height:37px;background:#efefe6;"></div><div style="left:1295.6px;top:0px;width:1.3px;height:37px;background:#efefe6;"></div><div style="left:478.8px;top:38px;width:1.3px;height:38px;background:#efefe6;"></div><div style="left:595.6px;top:38px;width:1.3px;height:38px;background:#efefe6;"></div><div style="left:708.6px;top:38px;width:1.3px;height:38px;background:#efefe6;"></div><div style="left:0px;top:75px;width:777.6px;height:1px;background:#efefe6;"></div><span class="t" style="top:9.05px;font-size:20.5px;line-height:20.5px;font-weight:700;-webkit-text-stroke:.35px;color:#000;left:86.2px;transform:scaleX(1.0276);transform-origin:0 0;">betonování podlahy do 100mm</span><span class="t" style="top:9.05px;font-size:20.5px;line-height:20.5px;font-weight:700;-webkit-text-stroke:.35px;color:#000;left:756.91px;transform:scaleX(1.0402);transform-origin:100% 0;">0,00</span><span class="t" style="top:9.05px;font-size:20.5px;line-height:20.5px;color:#000;left:900.41px;transform:scaleX(0.94);transform-origin:100% 0;">0,00</span><span class="t" style="top:9.05px;font-size:20.5px;line-height:20.5px;font-weight:700;-webkit-text-stroke:.35px;color:#000;left:1144.71px;transform:scaleX(1.0402);transform-origin:100% 0;">0,00</span><div style="left:1195.7px;top:13.3px;width:11.5px;height:11.5px;border:1.3px solid #3a3a3a;border-right-color:#c9c9c9;border-bottom-color:#c9c9c9;"></div><span class="t" style="top:9.05px;font-size:20.5px;line-height:20.5px;font-weight:700;-webkit-text-stroke:.35px;color:#000;left:1217.4px;transform:scaleX(0.9908);transform-origin:0 0;">0 %</span></div>
<div style="left:0px;top:849.5px;width:60.6px;height:76px;background:#d0dff8;border-right:1.3px solid #9a9a9a;border-bottom:1.3px solid #9a9a9a;border-left:1.3px solid #f3f7ff;border-top:1.3px solid #f3f7ff;"></div>
<span class="t" style="top:879.95px;font-size:20.5px;line-height:20.5px;color:#111;left:18.6px;transform:scaleX(0.943);transform-origin:50% 0;">68</span>
<div style="left:61px;top:925.5px;width:1300px;height:76px;overflow:hidden;"><div style="left:0px;top:0px;width:1300px;height:76px;background:#fff;"></div><div style="left:777.6px;top:37.6px;width:522.4px;height:38.4px;background:#d0dff8;"></div><div style="left:0px;top:37.3px;width:777.6px;height:1.2px;background:#efefef;"></div><div style="left:79.4px;top:0px;width:1.3px;height:37px;background:#efefef;"></div><div style="left:710.4px;top:0px;width:1.3px;height:37px;background:#efefef;"></div><div style="left:801.6px;top:0px;width:1.3px;height:37px;background:#efefef;"></div><div style="left:945.8px;top:0px;width:1.3px;height:37px;background:#efefef;"></div><div style="left:1017px;top:0px;width:1.3px;height:37px;background:#efefef;"></div><div style="left:1189.5px;top:0px;width:1.3px;height:37px;background:#efefef;"></div><div style="left:1212.8px;top:0px;width:1.3px;height:37px;background:#efefef;"></div><div style="left:1295.6px;top:0px;width:1.3px;height:37px;background:#efefef;"></div><div style="left:478.8px;top:38px;width:1.3px;height:38px;background:#efefef;"></div><div style="left:595.6px;top:38px;width:1.3px;height:38px;background:#efefef;"></div><div style="left:708.6px;top:38px;width:1.3px;height:38px;background:#efefef;"></div><div style="left:0px;top:75px;width:777.6px;height:1px;background:#efefef;"></div><span class="t" style="top:9.05px;font-size:20.5px;line-height:20.5px;font-weight:700;-webkit-text-stroke:.35px;color:#000;left:86.2px;transform:scaleX(0.9949);transform-origin:0 0;">montáž zakládací lišty pro zateplovací systém</span><span class="t" style="top:9.05px;font-size:20.5px;line-height:20.5px;font-weight:700;-webkit-text-stroke:.35px;color:#000;left:756.91px;transform:scaleX(1.0402);transform-origin:100% 0;">0,00</span><span class="t" style="top:9.05px;font-size:20.5px;line-height:20.5px;color:#000;left:900.41px;transform:scaleX(0.94);transform-origin:100% 0;">0,00</span><span class="t" style="top:9.05px;font-size:20.5px;line-height:20.5px;font-weight:700;-webkit-text-stroke:.35px;color:#000;left:1144.71px;transform:scaleX(1.0402);transform-origin:100% 0;">0,00</span><div style="left:1195.7px;top:13.3px;width:11.5px;height:11.5px;border:1.3px solid #3a3a3a;border-right-color:#c9c9c9;border-bottom-color:#c9c9c9;"></div><span class="t" style="top:9.05px;font-size:20.5px;line-height:20.5px;font-weight:700;-webkit-text-stroke:.35px;color:#000;left:1217.4px;transform:scaleX(0.9908);transform-origin:0 0;">0 %</span></div>
<div style="left:0px;top:925.5px;width:60.6px;height:76px;background:#d0dff8;border-right:1.3px solid #9a9a9a;border-bottom:1.3px solid #9a9a9a;border-left:1.3px solid #f3f7ff;border-top:1.3px solid #f3f7ff;"></div>
<span class="t" style="top:955.95px;font-size:20.5px;line-height:20.5px;color:#111;left:18.6px;transform:scaleX(0.943);transform-origin:50% 0;">69</span>
<div style="left:61px;top:1001.5px;width:1300px;height:76px;overflow:hidden;"><div style="left:0px;top:0px;width:1300px;height:76px;background:#ffffdf;"></div><div style="left:777.6px;top:37.6px;width:522.4px;height:38.4px;background:#d0dff8;"></div><div style="left:0px;top:37.3px;width:777.6px;height:1.2px;background:#efefe6;"></div><div style="left:79.4px;top:0px;width:1.3px;height:37px;background:#efefe6;"></div><div style="left:710.4px;top:0px;width:1.3px;height:37px;background:#efefe6;"></div><div style="left:801.6px;top:0px;width:1.3px;height:37px;background:#efefe6;"></div><div style="left:945.8px;top:0px;width:1.3px;height:37px;background:#efefe6;"></div><div style="left:1017px;top:0px;width:1.3px;height:37px;background:#efefe6;"></div><div style="left:1189.5px;top:0px;width:1.3px;height:37px;background:#efefe6;"></div><div style="left:1212.8px;top:0px;width:1.3px;height:37px;background:#efefe6;"></div><div style="left:1295.6px;top:0px;width:1.3px;height:37px;background:#efefe6;"></div><div style="left:478.8px;top:38px;width:1.3px;height:38px;background:#efefe6;"></div><div style="left:595.6px;top:38px;width:1.3px;height:38px;background:#efefe6;"></div><div style="left:708.6px;top:38px;width:1.3px;height:38px;background:#efefe6;"></div><div style="left:0px;top:75px;width:777.6px;height:1px;background:#efefe6;"></div><span class="t" style="top:9.05px;font-size:20.5px;line-height:20.5px;font-weight:700;-webkit-text-stroke:.35px;color:#000;left:86.2px;transform:scaleX(1.0043);transform-origin:0 0;">zateplení fasády polystyrenem včetně točené omítky</span><span class="t" style="top:9.05px;font-size:20.5px;line-height:20.5px;font-weight:700;-webkit-text-stroke:.35px;color:#000;left:756.91px;transform:scaleX(1.0402);transform-origin:100% 0;">0,00</span><span class="t" style="top:9.05px;font-size:20.5px;line-height:20.5px;color:#000;left:900.41px;transform:scaleX(0.94);transform-origin:100% 0;">0,00</span><span class="t" style="top:9.05px;font-size:20.5px;line-height:20.5px;font-weight:700;-webkit-text-stroke:.35px;color:#000;left:1144.71px;transform:scaleX(1.0402);transform-origin:100% 0;">0,00</span><div style="left:1195.7px;top:13.3px;width:11.5px;height:11.5px;border:1.3px solid #3a3a3a;border-right-color:#c9c9c9;border-bottom-color:#c9c9c9;"></div><span class="t" style="top:9.05px;font-size:20.5px;line-height:20.5px;font-weight:700;-webkit-text-stroke:.35px;color:#000;left:1217.4px;transform:scaleX(0.9908);transform-origin:0 0;">0 %</span></div>
<div style="left:0px;top:1001.5px;width:60.6px;height:76px;background:#d0dff8;border-right:1.3px solid #9a9a9a;border-bottom:1.3px solid #9a9a9a;border-left:1.3px solid #f3f7ff;border-top:1.3px solid #f3f7ff;"></div>
<span class="t" style="top:1031.95px;font-size:20.5px;line-height:20.5px;color:#111;left:18.6px;transform:scaleX(0.943);transform-origin:50% 0;">70</span>
<div style="left:61px;top:1077.5px;width:1300px;height:76px;overflow:hidden;"><div style="left:0px;top:0px;width:1300px;height:76px;background:#fff;"></div><div style="left:777.6px;top:37.6px;width:522.4px;height:38.4px;background:#d0dff8;"></div><div style="left:0px;top:37.3px;width:777.6px;height:1.2px;background:#efefef;"></div><div style="left:79.4px;top:0px;width:1.3px;height:37px;background:#efefef;"></div><div style="left:710.4px;top:0px;width:1.3px;height:37px;background:#efefef;"></div><div style="left:801.6px;top:0px;width:1.3px;height:37px;background:#efefef;"></div><div style="left:945.8px;top:0px;width:1.3px;height:37px;background:#efefef;"></div><div style="left:1017px;top:0px;width:1.3px;height:37px;background:#efefef;"></div><div style="left:1189.5px;top:0px;width:1.3px;height:37px;background:#efefef;"></div><div style="left:1212.8px;top:0px;width:1.3px;height:37px;background:#efefef;"></div><div style="left:1295.6px;top:0px;width:1.3px;height:37px;background:#efefef;"></div><div style="left:478.8px;top:38px;width:1.3px;height:38px;background:#efefef;"></div><div style="left:595.6px;top:38px;width:1.3px;height:38px;background:#efefef;"></div><div style="left:708.6px;top:38px;width:1.3px;height:38px;background:#efefef;"></div><div style="left:0px;top:75px;width:777.6px;height:1px;background:#efefef;"></div><span class="t" style="top:9.05px;font-size:20.5px;line-height:20.5px;font-weight:700;-webkit-text-stroke:.35px;color:#000;left:86.2px;transform:scaleX(1.0113);transform-origin:0 0;">zateplení fasády minerální vatou včetně točené omítky</span><span class="t" style="top:9.05px;font-size:20.5px;line-height:20.5px;font-weight:700;-webkit-text-stroke:.35px;color:#000;left:756.91px;transform:scaleX(1.0402);transform-origin:100% 0;">0,00</span><span class="t" style="top:9.05px;font-size:20.5px;line-height:20.5px;color:#000;left:900.41px;transform:scaleX(0.94);transform-origin:100% 0;">0,00</span><span class="t" style="top:9.05px;font-size:20.5px;line-height:20.5px;font-weight:700;-webkit-text-stroke:.35px;color:#000;left:1144.71px;transform:scaleX(1.0402);transform-origin:100% 0;">0,00</span><div style="left:1195.7px;top:13.3px;width:11.5px;height:11.5px;border:1.3px solid #3a3a3a;border-right-color:#c9c9c9;border-bottom-color:#c9c9c9;"></div><span class="t" style="top:9.05px;font-size:20.5px;line-height:20.5px;font-weight:700;-webkit-text-stroke:.35px;color:#000;left:1217.4px;transform:scaleX(0.9908);transform-origin:0 0;">0 %</span></div>
<div style="left:0px;top:1077.5px;width:60.6px;height:76px;background:#d0dff8;border-right:1.3px solid #9a9a9a;border-bottom:1.3px solid #9a9a9a;border-left:1.3px solid #f3f7ff;border-top:1.3px solid #f3f7ff;"></div>
<span class="t" style="top:1107.95px;font-size:20.5px;line-height:20.5px;color:#111;left:18.6px;transform:scaleX(0.943);transform-origin:50% 0;">71</span>
<div style="left:61px;top:1153.5px;width:1300px;height:76px;overflow:hidden;"><div style="left:0px;top:0px;width:1300px;height:76px;background:#ffffdf;"></div><div style="left:777.6px;top:37.6px;width:522.4px;height:38.4px;background:#d0dff8;"></div><div style="left:0px;top:37.3px;width:777.6px;height:1.2px;background:#efefe6;"></div><div style="left:79.4px;top:0px;width:1.3px;height:37px;background:#efefe6;"></div><div style="left:710.4px;top:0px;width:1.3px;height:37px;background:#efefe6;"></div><div style="left:801.6px;top:0px;width:1.3px;height:37px;background:#efefe6;"></div><div style="left:945.8px;top:0px;width:1.3px;height:37px;background:#efefe6;"></div><div style="left:1017px;top:0px;width:1.3px;height:37px;background:#efefe6;"></div><div style="left:1189.5px;top:0px;width:1.3px;height:37px;background:#efefe6;"></div><div style="left:1212.8px;top:0px;width:1.3px;height:37px;background:#efefe6;"></div><div style="left:1295.6px;top:0px;width:1.3px;height:37px;background:#efefe6;"></div><div style="left:478.8px;top:38px;width:1.3px;height:38px;background:#efefe6;"></div><div style="left:595.6px;top:38px;width:1.3px;height:38px;background:#efefe6;"></div><div style="left:708.6px;top:38px;width:1.3px;height:38px;background:#efefe6;"></div><div style="left:0px;top:75px;width:777.6px;height:1px;background:#efefe6;"></div><span class="t" style="top:9.05px;font-size:20.5px;line-height:20.5px;font-weight:700;-webkit-text-stroke:.35px;color:#000;left:86.2px;transform:scaleX(1.0048);transform-origin:0 0;">zateplení špalety polystyrenem včetně točené omítky</span><span class="t" style="top:9.05px;font-size:20.5px;line-height:20.5px;font-weight:700;-webkit-text-stroke:.35px;color:#000;left:756.91px;transform:scaleX(1.0402);transform-origin:100% 0;">0,00</span><span class="t" style="top:9.05px;font-size:20.5px;line-height:20.5px;color:#000;left:900.41px;transform:scaleX(0.94);transform-origin:100% 0;">0,00</span><span class="t" style="top:9.05px;font-size:20.5px;line-height:20.5px;font-weight:700;-webkit-text-stroke:.35px;color:#000;left:1144.71px;transform:scaleX(1.0402);transform-origin:100% 0;">0,00</span><div style="left:1195.7px;top:13.3px;width:11.5px;height:11.5px;border:1.3px solid #3a3a3a;border-right-color:#c9c9c9;border-bottom-color:#c9c9c9;"></div><span class="t" style="top:9.05px;font-size:20.5px;line-height:20.5px;font-weight:700;-webkit-text-stroke:.35px;color:#000;left:1217.4px;transform:scaleX(0.9908);transform-origin:0 0;">0 %</span></div>
<div style="left:0px;top:1153.5px;width:60.6px;height:76px;background:#d0dff8;border-right:1.3px solid #9a9a9a;border-bottom:1.3px solid #9a9a9a;border-left:1.3px solid #f3f7ff;border-top:1.3px solid #f3f7ff;"></div>
<span class="t" style="top:1183.95px;font-size:20.5px;line-height:20.5px;color:#111;left:18.6px;transform:scaleX(0.943);transform-origin:50% 0;">72</span>
<div style="left:61px;top:1229.5px;width:1300px;height:76px;overflow:hidden;"><div style="left:0px;top:0px;width:1300px;height:76px;background:#fff;"></div><div style="left:777.6px;top:37.6px;width:522.4px;height:38.4px;background:#d0dff8;"></div><div style="left:0px;top:37.3px;width:777.6px;height:1.2px;background:#efefef;"></div><div style="left:79.4px;top:0px;width:1.3px;height:37px;background:#efefef;"></div><div style="left:710.4px;top:0px;width:1.3px;height:37px;background:#efefef;"></div><div style="left:801.6px;top:0px;width:1.3px;height:37px;background:#efefef;"></div><div style="left:945.8px;top:0px;width:1.3px;height:37px;background:#efefef;"></div><div style="left:1017px;top:0px;width:1.3px;height:37px;background:#efefef;"></div><div style="left:1189.5px;top:0px;width:1.3px;height:37px;background:#efefef;"></div><div style="left:1212.8px;top:0px;width:1.3px;height:37px;background:#efefef;"></div><div style="left:1295.6px;top:0px;width:1.3px;height:37px;background:#efefef;"></div><div style="left:478.8px;top:38px;width:1.3px;height:38px;background:#efefef;"></div><div style="left:595.6px;top:38px;width:1.3px;height:38px;background:#efefef;"></div><div style="left:708.6px;top:38px;width:1.3px;height:38px;background:#efefef;"></div><div style="left:0px;top:75px;width:777.6px;height:1px;background:#efefef;"></div><span class="t" style="top:9.05px;font-size:20.5px;line-height:20.5px;font-weight:700;-webkit-text-stroke:.35px;color:#000;left:86.2px;transform:scaleX(1.0118);transform-origin:0 0;">zateplení špalety minerální vatou včetně točené omítky</span><span class="t" style="top:9.05px;font-size:20.5px;line-height:20.5px;font-weight:700;-webkit-text-stroke:.35px;color:#000;left:756.91px;transform:scaleX(1.0402);transform-origin:100% 0;">0,00</span><span class="t" style="top:9.05px;font-size:20.5px;line-height:20.5px;color:#000;left:900.41px;transform:scaleX(0.94);transform-origin:100% 0;">0,00</span><span class="t" style="top:9.05px;font-size:20.5px;line-height:20.5px;font-weight:700;-webkit-text-stroke:.35px;color:#000;left:1144.71px;transform:scaleX(1.0402);transform-origin:100% 0;">0,00</span><div style="left:1195.7px;top:13.3px;width:11.5px;height:11.5px;border:1.3px solid #3a3a3a;border-right-color:#c9c9c9;border-bottom-color:#c9c9c9;"></div><span class="t" style="top:9.05px;font-size:20.5px;line-height:20.5px;font-weight:700;-webkit-text-stroke:.35px;color:#000;left:1217.4px;transform:scaleX(0.9908);transform-origin:0 0;">0 %</span></div>
<div style="left:0px;top:1229.5px;width:60.6px;height:76px;background:#d0dff8;border-right:1.3px solid #9a9a9a;border-bottom:1.3px solid #9a9a9a;border-left:1.3px solid #f3f7ff;border-top:1.3px solid #f3f7ff;"></div>
<span class="t" style="top:1259.95px;font-size:20.5px;line-height:20.5px;color:#111;left:18.6px;transform:scaleX(0.943);transform-origin:50% 0;">73</span>
<div style="left:61px;top:1305.5px;width:1300px;height:76px;overflow:hidden;"><div style="left:0px;top:0px;width:1300px;height:76px;background:#ffffdf;"></div><div style="left:777.6px;top:37.6px;width:522.4px;height:38.4px;background:#d0dff8;"></div><div style="left:0px;top:37.3px;width:777.6px;height:1.2px;background:#efefe6;"></div><div style="left:79.4px;top:0px;width:1.3px;height:37px;background:#efefe6;"></div><div style="left:710.4px;top:0px;width:1.3px;height:37px;background:#efefe6;"></div><div style="left:801.6px;top:0px;width:1.3px;height:37px;background:#efefe6;"></div><div style="left:945.8px;top:0px;width:1.3px;height:37px;background:#efefe6;"></div><div style="left:1017px;top:0px;width:1.3px;height:37px;background:#efefe6;"></div><div style="left:1189.5px;top:0px;width:1.3px;height:37px;background:#efefe6;"></div><div style="left:1212.8px;top:0px;width:1.3px;height:37px;background:#efefe6;"></div><div style="left:1295.6px;top:0px;width:1.3px;height:37px;background:#efefe6;"></div><div style="left:478.8px;top:38px;width:1.3px;height:38px;background:#efefe6;"></div><div style="left:595.6px;top:38px;width:1.3px;height:38px;background:#efefe6;"></div><div style="left:708.6px;top:38px;width:1.3px;height:38px;background:#efefe6;"></div><div style="left:0px;top:75px;width:777.6px;height:1px;background:#efefe6;"></div><span class="t" style="top:9.05px;font-size:20.5px;line-height:20.5px;font-weight:700;-webkit-text-stroke:.35px;color:#000;left:86.2px;transform:scaleX(1.0083);transform-origin:0 0;">montáž rohové lišty s perlinkou</span><span class="t" style="top:9.05px;font-size:20.5px;line-height:20.5px;font-weight:700;-webkit-text-stroke:.35px;color:#000;left:756.91px;transform:scaleX(1.0402);transform-origin:100% 0;">0,00</span><span class="t" style="top:9.05px;font-size:20.5px;line-height:20.5px;color:#000;left:900.41px;transform:scaleX(0.94);transform-origin:100% 0;">0,00</span><span class="t" style="top:9.05px;font-size:20.5px;line-height:20.5px;font-weight:700;-webkit-text-stroke:.35px;color:#000;left:1144.71px;transform:scaleX(1.0402);transform-origin:100% 0;">0,00</span><div style="left:1195.7px;top:13.3px;width:11.5px;height:11.5px;border:1.3px solid #3a3a3a;border-right-color:#c9c9c9;border-bottom-color:#c9c9c9;"></div><span class="t" style="top:9.05px;font-size:20.5px;line-height:20.5px;font-weight:700;-webkit-text-stroke:.35px;color:#000;left:1217.4px;transform:scaleX(0.9908);transform-origin:0 0;">0 %</span></div>
<div style="left:0px;top:1305.5px;width:60.6px;height:76px;background:#d0dff8;border-right:1.3px solid #9a9a9a;border-bottom:1.3px solid #9a9a9a;border-left:1.3px solid #f3f7ff;border-top:1.3px solid #f3f7ff;"></div>
<span class="t" style="top:1335.95px;font-size:20.5px;line-height:20.5px;color:#111;left:18.6px;transform:scaleX(0.943);transform-origin:50% 0;">74</span>
<div style="left:61px;top:1381.5px;width:1300px;height:76px;overflow:hidden;"><div style="left:0px;top:0px;width:1300px;height:76px;background:#fff;"></div><div style="left:777.6px;top:37.6px;width:522.4px;height:38.4px;background:#d0dff8;"></div><div style="left:0px;top:37.3px;width:777.6px;height:1.2px;background:#efefef;"></div><div style="left:79.4px;top:0px;width:1.3px;height:37px;background:#efefef;"></div><div style="left:710.4px;top:0px;width:1.3px;height:37px;background:#efefef;"></div><div style="left:801.6px;top:0px;width:1.3px;height:37px;background:#efefef;"></div><div style="left:945.8px;top:0px;width:1.3px;height:37px;background:#efefef;"></div><div style="left:1017px;top:0px;width:1.3px;height:37px;background:#efefef;"></div><div style="left:1189.5px;top:0px;width:1.3px;height:37px;background:#efefef;"></div><div style="left:1212.8px;top:0px;width:1.3px;height:37px;background:#efefef;"></div><div style="left:1295.6px;top:0px;width:1.3px;height:37px;background:#efefef;"></div><div style="left:478.8px;top:38px;width:1.3px;height:38px;background:#efefef;"></div><div style="left:595.6px;top:38px;width:1.3px;height:38px;background:#efefef;"></div><div style="left:708.6px;top:38px;width:1.3px;height:38px;background:#efefef;"></div><div style="left:0px;top:75px;width:777.6px;height:1px;background:#efefef;"></div><span class="t" style="top:9.05px;font-size:20.5px;line-height:20.5px;font-weight:700;-webkit-text-stroke:.35px;color:#000;left:86.2px;transform:scaleX(1.0163);transform-origin:0 0;">montáž okapničky</span><span class="t" style="top:9.05px;font-size:20.5px;line-height:20.5px;font-weight:700;-webkit-text-stroke:.35px;color:#000;left:756.91px;transform:scaleX(1.0402);transform-origin:100% 0;">0,00</span><span class="t" style="top:9.05px;font-size:20.5px;line-height:20.5px;color:#000;left:900.41px;transform:scaleX(0.94);transform-origin:100% 0;">0,00</span><span class="t" style="top:9.05px;font-size:20.5px;line-height:20.5px;font-weight:700;-webkit-text-stroke:.35px;color:#000;left:1144.71px;transform:scaleX(1.0402);transform-origin:100% 0;">0,00</span><div style="left:1195.7px;top:13.3px;width:11.5px;height:11.5px;border:1.3px solid #3a3a3a;border-right-color:#c9c9c9;border-bottom-color:#c9c9c9;"></div><span class="t" style="top:9.05px;font-size:20.5px;line-height:20.5px;font-weight:700;-webkit-text-stroke:.35px;color:#000;left:1217.4px;transform:scaleX(0.9908);transform-origin:0 0;">0 %</span></div>
<div style="left:0px;top:1381.5px;width:60.6px;height:76px;background:#d0dff8;border-right:1.3px solid #9a9a9a;border-bottom:1.3px solid #9a9a9a;border-left:1.3px solid #f3f7ff;border-top:1.3px solid #f3f7ff;"></div>
<span class="t" style="top:1411.95px;font-size:20.5px;line-height:20.5px;color:#111;left:18.6px;transform:scaleX(0.943);transform-origin:50% 0;">75</span>
<div style="left:61px;top:1457.5px;width:1300px;height:76px;overflow:hidden;"><div style="left:0px;top:0px;width:1300px;height:76px;background:#ffffdf;"></div><div style="left:777.6px;top:37.6px;width:522.4px;height:38.4px;background:#d0dff8;"></div><div style="left:0px;top:37.3px;width:777.6px;height:1.2px;background:#efefe6;"></div><div style="left:79.4px;top:0px;width:1.3px;height:37px;background:#efefe6;"></div><div style="left:710.4px;top:0px;width:1.3px;height:37px;background:#efefe6;"></div><div style="left:801.6px;top:0px;width:1.3px;height:37px;background:#efefe6;"></div><div style="left:945.8px;top:0px;width:1.3px;height:37px;background:#efefe6;"></div><div style="left:1017px;top:0px;width:1.3px;height:37px;background:#efefe6;"></div><div style="left:1189.5px;top:0px;width:1.3px;height:37px;background:#efefe6;"></div><div style="left:1212.8px;top:0px;width:1.3px;height:37px;background:#efefe6;"></div><div style="left:1295.6px;top:0px;width:1.3px;height:37px;background:#efefe6;"></div><div style="left:478.8px;top:38px;width:1.3px;height:38px;background:#efefe6;"></div><div style="left:595.6px;top:38px;width:1.3px;height:38px;background:#efefe6;"></div><div style="left:708.6px;top:38px;width:1.3px;height:38px;background:#efefe6;"></div><div style="left:0px;top:75px;width:777.6px;height:1px;background:#efefe6;"></div><span class="t" style="top:9.05px;font-size:20.5px;line-height:20.5px;font-weight:700;-webkit-text-stroke:.35px;color:#000;left:86.2px;transform:scaleX(1.0119);transform-origin:0 0;">montáž apu lišty</span><span class="t" style="top:9.05px;font-size:20.5px;line-height:20.5px;font-weight:700;-webkit-text-stroke:.35px;color:#000;left:756.91px;transform:scaleX(1.0402);transform-origin:100% 0;">0,00</span><span class="t" style="top:9.05px;font-size:20.5px;line-height:20.5px;color:#000;left:900.41px;transform:scaleX(0.94);transform-origin:100% 0;">0,00</span><span class="t" style="top:9.05px;font-size:20.5px;line-height:20.5px;font-weight:700;-webkit-text-stroke:.35px;color:#000;left:1144.71px;transform:scaleX(1.0402);transform-origin:100% 0;">0,00</span><div style="left:1195.7px;top:13.3px;width:11.5px;height:11.5px;border:1.3px solid #3a3a3a;border-right-color:#c9c9c9;border-bottom-color:#c9c9c9;"></div><span class="t" style="top:9.05px;font-size:20.5px;line-height:20.5px;font-weight:700;-webkit-text-stroke:.35px;color:#000;left:1217.4px;transform:scaleX(0.9908);transform-origin:0 0;">0 %</span></div>
<div style="left:0px;top:1457.5px;width:60.6px;height:76px;background:#d0dff8;border-right:1.3px solid #9a9a9a;border-bottom:1.3px solid #9a9a9a;border-left:1.3px solid #f3f7ff;border-top:1.3px solid #f3f7ff;"></div>
<span class="t" style="top:1487.95px;font-size:20.5px;line-height:20.5px;color:#111;left:18.6px;transform:scaleX(0.943);transform-origin:50% 0;">76</span>
<div style="left:61px;top:1533.5px;width:1300px;height:76px;overflow:hidden;"><div style="left:0px;top:0px;width:1300px;height:76px;background:#fff;"></div><div style="left:777.6px;top:37.6px;width:522.4px;height:38.4px;background:#d0dff8;"></div><div style="left:0px;top:37.3px;width:777.6px;height:1.2px;background:#efefef;"></div><div style="left:79.4px;top:0px;width:1.3px;height:37px;background:#efefef;"></div><div style="left:710.4px;top:0px;width:1.3px;height:37px;background:#efefef;"></div><div style="left:801.6px;top:0px;width:1.3px;height:37px;background:#efefef;"></div><div style="left:945.8px;top:0px;width:1.3px;height:37px;background:#efefef;"></div><div style="left:1017px;top:0px;width:1.3px;height:37px;background:#efefef;"></div><div style="left:1189.5px;top:0px;width:1.3px;height:37px;background:#efefef;"></div><div style="left:1212.8px;top:0px;width:1.3px;height:37px;background:#efefef;"></div><div style="left:1295.6px;top:0px;width:1.3px;height:37px;background:#efefef;"></div><div style="left:478.8px;top:38px;width:1.3px;height:38px;background:#efefef;"></div><div style="left:595.6px;top:38px;width:1.3px;height:38px;background:#efefef;"></div><div style="left:708.6px;top:38px;width:1.3px;height:38px;background:#efefef;"></div><div style="left:0px;top:75px;width:777.6px;height:1px;background:#efefef;"></div><span class="t" style="top:9.05px;font-size:20.5px;line-height:20.5px;font-weight:700;-webkit-text-stroke:.35px;color:#000;left:86.2px;transform:scaleX(1.0168);transform-origin:0 0;">přechod barvy omítky</span><span class="t" style="top:9.05px;font-size:20.5px;line-height:20.5px;font-weight:700;-webkit-text-stroke:.35px;color:#000;left:756.91px;transform:scaleX(1.0402);transform-origin:100% 0;">0,00</span><span class="t" style="top:9.05px;font-size:20.5px;line-height:20.5px;color:#000;left:900.41px;transform:scaleX(0.94);transform-origin:100% 0;">0,00</span><span class="t" style="top:9.05px;font-size:20.5px;line-height:20.5px;font-weight:700;-webkit-text-stroke:.35px;color:#000;left:1144.71px;transform:scaleX(1.0402);transform-origin:100% 0;">0,00</span><div style="left:1195.7px;top:13.3px;width:11.5px;height:11.5px;border:1.3px solid #3a3a3a;border-right-color:#c9c9c9;border-bottom-color:#c9c9c9;"></div><span class="t" style="top:9.05px;font-size:20.5px;line-height:20.5px;font-weight:700;-webkit-text-stroke:.35px;color:#000;left:1217.4px;transform:scaleX(0.9908);transform-origin:0 0;">0 %</span></div>
<div style="left:0px;top:1533.5px;width:60.6px;height:76px;background:#d0dff8;border-right:1.3px solid #9a9a9a;border-bottom:1.3px solid #9a9a9a;border-left:1.3px solid #f3f7ff;border-top:1.3px solid #f3f7ff;"></div>
<span class="t" style="top:1563.95px;font-size:20.5px;line-height:20.5px;color:#111;left:18.6px;transform:scaleX(0.943);transform-origin:50% 0;">77</span>
<div style="left:61px;top:1609.5px;width:1300px;height:76px;overflow:hidden;"><div style="left:0px;top:0px;width:1300px;height:76px;background:#ffffdf;"></div><div style="left:777.6px;top:37.6px;width:522.4px;height:38.4px;background:#d0dff8;"></div><div style="left:0px;top:37.3px;width:777.6px;height:1.2px;background:#efefe6;"></div><div style="left:79.4px;top:0px;width:1.3px;height:37px;background:#efefe6;"></div><div style="left:710.4px;top:0px;width:1.3px;height:37px;background:#efefe6;"></div><div style="left:801.6px;top:0px;width:1.3px;height:37px;background:#efefe6;"></div><div style="left:945.8px;top:0px;width:1.3px;height:37px;background:#efefe6;"></div><div style="left:1017px;top:0px;width:1.3px;height:37px;background:#efefe6;"></div><div style="left:1189.5px;top:0px;width:1.3px;height:37px;background:#efefe6;"></div><div style="left:1212.8px;top:0px;width:1.3px;height:37px;background:#efefe6;"></div><div style="left:1295.6px;top:0px;width:1.3px;height:37px;background:#efefe6;"></div><div style="left:478.8px;top:38px;width:1.3px;height:38px;background:#efefe6;"></div><div style="left:595.6px;top:38px;width:1.3px;height:38px;background:#efefe6;"></div><div style="left:708.6px;top:38px;width:1.3px;height:38px;background:#efefe6;"></div><div style="left:0px;top:75px;width:777.6px;height:1px;background:#efefe6;"></div><span class="t" style="top:9.05px;font-size:20.5px;line-height:20.5px;font-weight:700;-webkit-text-stroke:.35px;color:#000;left:86.2px;transform:scaleX(1.0097);transform-origin:0 0;">sekání šlicu v cihle (do šíře 30mm, do hl.30mm)</span><span class="t" style="top:9.05px;font-size:20.5px;line-height:20.5px;font-weight:700;-webkit-text-stroke:.35px;color:#000;left:756.91px;transform:scaleX(1.0402);transform-origin:100% 0;">0,00</span><span class="t" style="top:9.05px;font-size:20.5px;line-height:20.5px;color:#000;left:900.41px;transform:scaleX(0.94);transform-origin:100% 0;">0,00</span><span class="t" style="top:9.05px;font-size:20.5px;line-height:20.5px;font-weight:700;-webkit-text-stroke:.35px;color:#000;left:1144.71px;transform:scaleX(1.0402);transform-origin:100% 0;">0,00</span><div style="left:1195.7px;top:13.3px;width:11.5px;height:11.5px;border:1.3px solid #3a3a3a;border-right-color:#c9c9c9;border-bottom-color:#c9c9c9;"></div><span class="t" style="top:9.05px;font-size:20.5px;line-height:20.5px;font-weight:700;-webkit-text-stroke:.35px;color:#000;left:1217.4px;transform:scaleX(0.9908);transform-origin:0 0;">0 %</span></div>
<div style="left:0px;top:1609.5px;width:60.6px;height:76px;background:#d0dff8;border-right:1.3px solid #9a9a9a;border-bottom:1.3px solid #9a9a9a;border-left:1.3px solid #f3f7ff;border-top:1.3px solid #f3f7ff;"></div>
<span class="t" style="top:1639.95px;font-size:20.5px;line-height:20.5px;color:#111;left:18.6px;transform:scaleX(0.943);transform-origin:50% 0;">78</span>
<div style="left:61px;top:1685.5px;width:1300px;height:76px;overflow:hidden;"><div style="left:0px;top:0px;width:1300px;height:76px;background:#fff;"></div><div style="left:777.6px;top:37.6px;width:522.4px;height:38.4px;background:#d0dff8;"></div><div style="left:0px;top:37.3px;width:777.6px;height:1.2px;background:#efefef;"></div><div style="left:79.4px;top:0px;width:1.3px;height:37px;background:#efefef;"></div><div style="left:710.4px;top:0px;width:1.3px;height:37px;background:#efefef;"></div><div style="left:801.6px;top:0px;width:1.3px;height:37px;background:#efefef;"></div><div style="left:945.8px;top:0px;width:1.3px;height:37px;background:#efefef;"></div><div style="left:1017px;top:0px;width:1.3px;height:37px;background:#efefef;"></div><div style="left:1189.5px;top:0px;width:1.3px;height:37px;background:#efefef;"></div><div style="left:1212.8px;top:0px;width:1.3px;height:37px;background:#efefef;"></div><div style="left:1295.6px;top:0px;width:1.3px;height:37px;background:#efefef;"></div><div style="left:478.8px;top:38px;width:1.3px;height:38px;background:#efefef;"></div><div style="left:595.6px;top:38px;width:1.3px;height:38px;background:#efefef;"></div><div style="left:708.6px;top:38px;width:1.3px;height:38px;background:#efefef;"></div><div style="left:0px;top:75px;width:777.6px;height:1px;background:#efefef;"></div><span class="t" style="top:9.05px;font-size:20.5px;line-height:20.5px;font-weight:700;-webkit-text-stroke:.35px;color:#000;left:86.2px;transform:scaleX(1.0097);transform-origin:0 0;">sekání šlicu v cihle (do šíře 50mm, do hl.50mm)</span><span class="t" style="top:9.05px;font-size:20.5px;line-height:20.5px;font-weight:700;-webkit-text-stroke:.35px;color:#000;left:756.91px;transform:scaleX(1.0402);transform-origin:100% 0;">0,00</span><span class="t" style="top:9.05px;font-size:20.5px;line-height:20.5px;color:#000;left:900.41px;transform:scaleX(0.94);transform-origin:100% 0;">0,00</span><span class="t" style="top:9.05px;font-size:20.5px;line-height:20.5px;font-weight:700;-webkit-text-stroke:.35px;color:#000;left:1144.71px;transform:scaleX(1.0402);transform-origin:100% 0;">0,00</span><div style="left:1195.7px;top:13.3px;width:11.5px;height:11.5px;border:1.3px solid #3a3a3a;border-right-color:#c9c9c9;border-bottom-color:#c9c9c9;"></div><span class="t" style="top:9.05px;font-size:20.5px;line-height:20.5px;font-weight:700;-webkit-text-stroke:.35px;color:#000;left:1217.4px;transform:scaleX(0.9908);transform-origin:0 0;">0 %</span></div>
<div style="left:0px;top:1685.5px;width:60.6px;height:76px;background:#d0dff8;border-right:1.3px solid #9a9a9a;border-bottom:1.3px solid #9a9a9a;border-left:1.3px solid #f3f7ff;border-top:1.3px solid #f3f7ff;"></div>
<span class="t" style="top:1715.95px;font-size:20.5px;line-height:20.5px;color:#111;left:18.6px;transform:scaleX(0.943);transform-origin:50% 0;">79</span>
<div style="left:61px;top:1761.5px;width:1300px;height:76px;overflow:hidden;"><div style="left:0px;top:0px;width:1300px;height:76px;background:#ffffdf;"></div><div style="left:777.6px;top:37.6px;width:522.4px;height:38.4px;background:#d0dff8;"></div><div style="left:0px;top:37.3px;width:777.6px;height:1.2px;background:#efefe6;"></div><div style="left:79.4px;top:0px;width:1.3px;height:37px;background:#efefe6;"></div><div style="left:710.4px;top:0px;width:1.3px;height:37px;background:#efefe6;"></div><div style="left:801.6px;top:0px;width:1.3px;height:37px;background:#efefe6;"></div><div style="left:945.8px;top:0px;width:1.3px;height:37px;background:#efefe6;"></div><div style="left:1017px;top:0px;width:1.3px;height:37px;background:#efefe6;"></div><div style="left:1189.5px;top:0px;width:1.3px;height:37px;background:#efefe6;"></div><div style="left:1212.8px;top:0px;width:1.3px;height:37px;background:#efefe6;"></div><div style="left:1295.6px;top:0px;width:1.3px;height:37px;background:#efefe6;"></div><div style="left:478.8px;top:38px;width:1.3px;height:38px;background:#efefe6;"></div><div style="left:595.6px;top:38px;width:1.3px;height:38px;background:#efefe6;"></div><div style="left:708.6px;top:38px;width:1.3px;height:38px;background:#efefe6;"></div><div style="left:0px;top:75px;width:777.6px;height:1px;background:#efefe6;"></div><span class="t" style="top:9.05px;font-size:20.5px;line-height:20.5px;font-weight:700;-webkit-text-stroke:.35px;color:#000;left:86.2px;transform:scaleX(1.0107);transform-origin:0 0;">sekání šlicu v cihle (do šíře 100mm, do hl.50mm)</span><span class="t" style="top:9.05px;font-size:20.5px;line-height:20.5px;font-weight:700;-webkit-text-stroke:.35px;color:#000;left:756.91px;transform:scaleX(1.0402);transform-origin:100% 0;">0,00</span><span class="t" style="top:9.05px;font-size:20.5px;line-height:20.5px;color:#000;left:900.41px;transform:scaleX(0.94);transform-origin:100% 0;">0,00</span><span class="t" style="top:9.05px;font-size:20.5px;line-height:20.5px;font-weight:700;-webkit-text-stroke:.35px;color:#000;left:1144.71px;transform:scaleX(1.0402);transform-origin:100% 0;">0,00</span><div style="left:1195.7px;top:13.3px;width:11.5px;height:11.5px;border:1.3px solid #3a3a3a;border-right-color:#c9c9c9;border-bottom-color:#c9c9c9;"></div><span class="t" style="top:9.05px;font-size:20.5px;line-height:20.5px;font-weight:700;-webkit-text-stroke:.35px;color:#000;left:1217.4px;transform:scaleX(0.9908);transform-origin:0 0;">0 %</span></div>
<div style="left:0px;top:1761.5px;width:60.6px;height:76px;background:#d0dff8;border-right:1.3px solid #9a9a9a;border-bottom:1.3px solid #9a9a9a;border-left:1.3px solid #f3f7ff;border-top:1.3px solid #f3f7ff;"></div>
<span class="t" style="top:1791.95px;font-size:20.5px;line-height:20.5px;color:#111;left:18.6px;transform:scaleX(0.943);transform-origin:50% 0;">80</span>
<div style="left:61px;top:1837.5px;width:1300px;height:76px;overflow:hidden;"><div style="left:0px;top:0px;width:1300px;height:76px;background:#000;"></div><div style="left:777.6px;top:37.6px;width:522.4px;height:38.4px;background:#2e1e08;"></div><div style="left:0px;top:37.3px;width:777.6px;height:1.2px;background:#161616;"></div><div style="left:79.4px;top:0px;width:1.3px;height:37px;background:#161616;"></div><div style="left:710.4px;top:0px;width:1.3px;height:37px;background:#161616;"></div><div style="left:801.6px;top:0px;width:1.3px;height:37px;background:#161616;"></div><div style="left:945.8px;top:0px;width:1.3px;height:37px;background:#161616;"></div><div style="left:1017px;top:0px;width:1.3px;height:37px;background:#161616;"></div><div style="left:1189.5px;top:0px;width:1.3px;height:37px;background:#161616;"></div><div style="left:1212.8px;top:0px;width:1.3px;height:37px;background:#161616;"></div><div style="left:1295.6px;top:0px;width:1.3px;height:37px;background:#161616;"></div><div style="left:478.8px;top:38px;width:1.3px;height:38px;background:#161616;"></div><div style="left:595.6px;top:38px;width:1.3px;height:38px;background:#161616;"></div><div style="left:708.6px;top:38px;width:1.3px;height:38px;background:#161616;"></div><span class="t" style="top:9.05px;font-size:20.5px;line-height:20.5px;font-weight:700;-webkit-text-stroke:.35px;color:#fff;left:86.2px;transform:scaleX(1.0107);transform-origin:0 0;">sekání šlicu v cihle (do šíře 200mm, do hl.50mm)</span><span class="t" style="top:9.05px;font-size:20.5px;line-height:20.5px;font-weight:700;-webkit-text-stroke:.35px;color:#fff;left:756.91px;transform:scaleX(1.0402);transform-origin:100% 0;">0,00</span><span class="t" style="top:9.05px;font-size:20.5px;line-height:20.5px;color:#fff;left:900.41px;transform:scaleX(0.94);transform-origin:100% 0;">0,00</span><span class="t" style="top:9.05px;font-size:20.5px;line-height:20.5px;font-weight:700;-webkit-text-stroke:.35px;color:#fff;left:1144.71px;transform:scaleX(1.0402);transform-origin:100% 0;">0,00</span><div style="left:1195.7px;top:13.3px;width:11.5px;height:11.5px;border:1.3px solid #bbb;border-right-color:#555;border-bottom-color:#555;"></div><span class="t" style="top:9.05px;font-size:20.5px;line-height:20.5px;font-weight:700;-webkit-text-stroke:.35px;color:#fff;left:1217.4px;transform:scaleX(0.9908);transform-origin:0 0;">0 %</span></div>
<div style="left:0px;top:1837.5px;width:60.6px;height:76px;background:#2e1e08;border-right:1.3px solid #9a9a9a;border-bottom:1.3px solid #9a9a9a;border-left:1.3px solid #2e1e08;border-top:1.3px solid #2e1e08;"></div>
<span class="t" style="top:1867.95px;font-size:20.5px;line-height:20.5px;font-weight:700;-webkit-text-stroke:.35px;color:#fff;left:18.6px;transform:scaleX(0.9868);transform-origin:50% 0;">81</span>
<div style="left:61px;top:1913.5px;width:1300px;height:76px;overflow:hidden;"><div style="left:0px;top:0px;width:1300px;height:76px;background:#ffffdf;"></div><div style="left:777.6px;top:37.6px;width:522.4px;height:38.4px;background:#d0dff8;"></div><div style="left:0px;top:37.3px;width:777.6px;height:1.2px;background:#efefe6;"></div><div style="left:79.4px;top:0px;width:1.3px;height:37px;background:#efefe6;"></div><div style="left:710.4px;top:0px;width:1.3px;height:37px;background:#efefe6;"></div><div style="left:801.6px;top:0px;width:1.3px;height:37px;background:#efefe6;"></div><div style="left:945.8px;top:0px;width:1.3px;height:37px;background:#efefe6;"></div><div style="left:1017px;top:0px;width:1.3px;height:37px;background:#efefe6;"></div><div style="left:1189.5px;top:0px;width:1.3px;height:37px;background:#efefe6;"></div><div style="left:1212.8px;top:0px;width:1.3px;height:37px;background:#efefe6;"></div><div style="left:1295.6px;top:0px;width:1.3px;height:37px;background:#efefe6;"></div><div style="left:478.8px;top:38px;width:1.3px;height:38px;background:#efefe6;"></div><div style="left:595.6px;top:38px;width:1.3px;height:38px;background:#efefe6;"></div><div style="left:708.6px;top:38px;width:1.3px;height:38px;background:#efefe6;"></div><div style="left:0px;top:75px;width:777.6px;height:1px;background:#efefe6;"></div><span class="t" style="top:9.05px;font-size:20.5px;line-height:20.5px;font-weight:700;-webkit-text-stroke:.35px;color:#000;left:756.91px;transform:scaleX(1.0402);transform-origin:100% 0;">0,00</span><span class="t" style="top:9.05px;font-size:20.5px;line-height:20.5px;color:#000;left:900.41px;transform:scaleX(0.94);transform-origin:100% 0;">0,00</span><span class="t" style="top:9.05px;font-size:20.5px;line-height:20.5px;font-weight:700;-webkit-text-stroke:.35px;color:#000;left:1144.71px;transform:scaleX(1.0402);transform-origin:100% 0;">0,00</span><div style="left:1195.7px;top:13.3px;width:11.5px;height:11.5px;border:1.3px solid #3a3a3a;border-right-color:#c9c9c9;border-bottom-color:#c9c9c9;"></div><span class="t" style="top:9.05px;font-size:20.5px;line-height:20.5px;font-weight:700;-webkit-text-stroke:.35px;color:#000;left:1217.4px;transform:scaleX(0.9908);transform-origin:0 0;">0 %</span></div>
<div style="left:0px;top:1913.5px;width:60.6px;height:76px;background:#d0dff8;border-right:1.3px solid #9a9a9a;border-bottom:1.3px solid #9a9a9a;border-left:1.3px solid #f3f7ff;border-top:1.3px solid #f3f7ff;"></div>
<span class="t" style="top:1952.15px;font-size:20.5px;line-height:20.5px;left:26.01px;transform:scaleX(1);transform-origin:50% 0;">*</span>
<div style="left:0px;top:1989.5px;width:1391px;height:5.5px;background:#cfdcf8;"></div>
<div style="left:0px;top:1995px;width:1391px;height:10px;background:#f0f0f0;"></div>
<div style="left:0px;top:1989.5px;width:60.6px;height:5.5px;background:#d0dff8;border-right:1.3px solid #9a9a9a;"></div>
<div style="left:1360.8px;top:790.2px;width:30px;height:1204.8px;background:#f0f0f0;"></div>
<div style="left:1373.5px;top:1702.5px;width:6.5px;height:202px;background:#868686;border-radius:3.5px;"></div>
<div style="left:1361px;top:790.2px;width:29.5px;height:29.4px;background:#f0f0f0;border:1.3px solid #fff;border-right-color:#6e6e6e;border-bottom-color:#6e6e6e;"></div><div style="left:1371.5px;top:800.9px;width:8px;height:1.3px;background:#111;"></div><svg style="left:1371.5px;top:802.9000000000001px" width="8" height="5" viewBox="0 0 8 5"><path d="M0 5h8L4 0z" fill="#111"/></svg>
<div style="left:1361px;top:1935.4px;width:29.5px;height:28.8px;background:#f0f0f0;border:1.3px solid #fff;border-right-color:#6e6e6e;border-bottom-color:#6e6e6e;"></div><div style="left:1371.5px;top:1952.3px;width:8px;height:1.3px;background:#111;"></div><svg style="left:1371.5px;top:1946.8000000000002px" width="8" height="5" viewBox="0 0 8 5"><path d="M0 0h8L4 5z" fill="#111"/></svg>
<div style="left:1361px;top:1964.6px;width:29.5px;height:29.4px;background:#f0f0f0;border:1.3px solid #fff;border-right-color:#6e6e6e;border-bottom-color:#6e6e6e;"></div><span class="t" style="top:1974.68px;font-size:9px;line-height:9px;color:#222;left:1372.87px;transform:scaleX(1);transform-origin:50% 0;">×</span>
</div>
<div id="calc" style="left:1608.4px;top:110.8px;width:1444.4px;height:1509.4px;background:#efefef;border-radius:12px;overflow:hidden;box-shadow:0 0 0 1px rgba(60,70,90,.5),0 8px 22px rgba(0,0,30,.28)">
<div style="left:-1608.4px;top:-110.8px;width:3120px;height:2005px">
<div style="left:1608px;top:110px;width:1446px;height:51px;background:#f3f3f3;"></div>
<svg style="left:1622.5px;top:120.5px" width="23" height="29" viewBox="0 0 23 29">
<path d="M2.500 0H14l9 9v17.500a2.500 2.500 0 0 1-2.500 2.500h-18A2.500 2.500 0 0 1 0 26.500v-24A2.500 2.500 0 0 1 2.500 0z" fill="#3fb845"/>
<path d="M14 0l9 9h-6.500A2.500 2.500 0 0 1 14 6.500z" fill="#8fdc8f"/>
<rect x="5" y="14" width="13" height="9" fill="#fff"/><path d="M5 17h13M5 20h13M9.300 14v9M13.700 14v9" stroke="#3fb845" stroke-width="1"/><rect x="13.700" y="17" width="4.300" height="6" fill="#c9efc9"/></svg>
<span class="t" style="top:126.05px;font-size:20.5px;line-height:20.5px;color:#8b8b8b;left:1658.5px;transform:scaleX(0.9997);transform-origin:0 0;">ceniky-2025-04-29.xlsx — LibreOffice Calc</span>
<svg style="left:2830px;top:120px" width="200" height="32" viewBox="0 0 200 32" fill="none" stroke="#8c8c8c" stroke-width="1.4">
<path d="M13 15.300h15"/><rect x="94.400" y="8.400" width="14.200" height="14.200" rx="2"/><path d="M175.200 8.200l14.600 14.600M189.800 8.200l-14.600 14.600"/></svg>
<div style="left:1608px;top:160.6px;width:1446px;height:135.6px;background:linear-gradient(180deg,#ffffff 0%,#fdfdfd 40%,#f7f7f7 75%,#eeeeee 100%);"></div>
<div style="left:1608px;top:295.8px;width:1446px;height:1.3px;background:#c3c3c3;"></div>
<span class="t" style="top:169.45px;font-size:20.5px;line-height:20.5px;left:1622.4px;transform:scaleX(0.9985);transform-origin:0 0;">Soubor</span>
<span class="t" style="top:169.45px;font-size:20.5px;line-height:20.5px;left:1716.2px;transform:scaleX(0.9857);transform-origin:0 0;">Úpravy</span>
<span class="t" style="top:169.45px;font-size:20.5px;line-height:20.5px;left:1808px;transform:scaleX(1.0196);transform-origin:0 0;">Zobrazit</span>
<span class="t" style="top:169.45px;font-size:20.5px;line-height:20.5px;left:1911px;transform:scaleX(1.0174);transform-origin:0 0;">Vložit</span>
<span class="t" style="top:169.45px;font-size:20.5px;line-height:20.5px;left:1991px;transform:scaleX(0.9859);transform-origin:0 0;">Formát</span>
<span class="t" style="top:169.45px;font-size:20.5px;line-height:20.5px;left:2083.4px;transform:scaleX(0.9454);transform-origin:0 0;">Styly</span>
<span class="t" style="top:169.45px;font-size:20.5px;line-height:20.5px;left:2153.8px;transform:scaleX(0.9561);transform-origin:0 0;">List</span>
<span class="t" style="top:169.45px;font-size:20.5px;line-height:20.5px;left:2213.2px;transform:scaleX(0.9815);transform-origin:0 0;">Data</span>
<span class="t" style="top:169.45px;font-size:20.5px;line-height:20.5px;left:2285px;transform:scaleX(1.0088);transform-origin:0 0;">Nástroje</span>
<span class="t" style="top:169.45px;font-size:20.5px;line-height:20.5px;left:2390px;transform:scaleX(1.0205);transform-origin:0 0;">Okno</span>
<span class="t" style="top:169.45px;font-size:20.5px;line-height:20.5px;left:2468.5px;transform:scaleX(1.0005);transform-origin:0 0;">Nápověda</span>
<svg style="left:3033.5px;top:170.500px" width="13" height="13" viewBox="0 0 13 13" fill="none" stroke="#222" stroke-width="1.6"><path d="M1 1l11 11M12 1L1 12"/></svg>
<svg style="left:1618px;top:205px" width="30" height="30" viewBox="0 0 24 24" fill="none"><path d="M3.500 .500h11l6 6v17h-17z" fill="#fff" stroke="#1f9a4a" stroke-width="1.200"/><path d="M14.500 .500v6h6" stroke="#1f9a4a" stroke-width="1.200"/><rect x="6" y="10" width="12" height="10" fill="#1f9a4a"/><path d="M6 13.300h12M6 16.600h12M10 10v10M14 10v10" stroke="#fff" stroke-width=".9"/></svg>
<svg style="left:1658.2px;top:219.6px" width="11.600" height="6.400" viewBox="0 0 12 6.600"><path d="M0 0h12L6 6.600z" fill="#111"/></svg>
<svg style="left:1678.5px;top:204px" width="32" height="32" viewBox="0 0 24 24" fill="none"><path d="M1.500 21.500v-18h7l2.500 3h9v3" fill="#fff" stroke="#ed8733" stroke-width="1.200"/><path d="M1.500 21.500l3.500-12h18l-3.500 12z" fill="#f8db8f" stroke="#ed8733" stroke-width="1.200"/></svg>
<svg style="left:1719.2px;top:219.6px" width="11.600" height="6.400" viewBox="0 0 12 6.600"><path d="M0 0h12L6 6.600z" fill="#111"/></svg>
<svg style="left:1740px;top:205px" width="30" height="30" viewBox="0 0 24 24" fill="none"><path d="M1 1h22v22H3.500L1 20.500z" fill="#d89ad8" stroke="#9b2fa3" stroke-width="1.400"/><rect x="5" y="1" width="14" height="9" fill="#fff" stroke="#9b2fa3" stroke-width="1.200"/><rect x="7" y="15" width="11" height="8" fill="#fff" stroke="#9b2fa3" stroke-width="1.200"/><rect x="9" y="17" width="2.500" height="6" fill="#9b2fa3"/></svg>
<svg style="left:1780.2px;top:219.6px" width="11.600" height="6.400" viewBox="0 0 12 6.600"><path d="M0 0h12L6 6.600z" fill="#111"/></svg>
<div style="left:1798px;top:209px;width:1.2px;height:24px;background:#cfcfcf;"></div>
<svg style="left:1813px;top:205px" width="30" height="30" viewBox="0 0 24 24" fill="none"><path d="M4 1.500h10.500l5 5V22.500H4z" fill="#fff" stroke="#3a3a3a" stroke-width="1.500"/><path d="M14.500 1.500v5h5" stroke="#3a3a3a" stroke-width="1.300"/><path d="M17 13c-1 5-3 9-5 10.500M17 13c1 4 4 7 7.500 7.500M12 23c3-2.500 8-3.500 12-2.500" stroke="#e63946" stroke-width="1.400"/></svg>
<svg style="left:1855.5px;top:205px" width="30" height="30" viewBox="0 0 24 24" fill="none"><rect x="6.500" y="2" width="11" height="7" fill="#fff" stroke="#3a3a3a" stroke-width="1.400"/><path d="M5 8.500h14" stroke="#1e8bcd" stroke-width="2.200"/><rect x="1" y="9.500" width="22" height="9.500" rx="1" fill="#6f6f6f" stroke="#3a3a3a" stroke-width="1.200"/><rect x="6.500" y="17.500" width="11" height="5" fill="#fff" stroke="#3a3a3a" stroke-width="1.400"/><rect x="18.500" y="14.500" width="2.500" height="1.600" fill="#fff"/></svg>
<svg style="left:1903px;top:205px" width="30" height="30" viewBox="0 0 24 24" fill="none"><path d="M4 1.500h10.500l5 5V22.500H4z" fill="#fff" stroke="#3a3a3a" stroke-width="1.500"/><path d="M14.500 1.500v5h5" stroke="#3a3a3a" stroke-width="1.300"/><circle cx="15" cy="15.500" r="4.800" fill="#fff" stroke="#1e8bcd" stroke-width="1.400"/><path d="M18.500 19l4.500 4.500" stroke="#1e8bcd" stroke-width="1.600"/></svg>
<div style="left:1940.9px;top:209px;width:1.2px;height:24px;background:#cfcfcf;"></div>
<svg style="left:1954px;top:205px" width="30" height="30" viewBox="0 0 24 24" fill="none"><path d="M6 1.500l8.500 15M18 1.500l-8.500 15" stroke="#3a3a3a" stroke-width="1.600"/><circle cx="5" cy="19.500" r="3" stroke="#1e8bcd" stroke-width="1.400"/><circle cx="19" cy="19.500" r="3" stroke="#1e8bcd" stroke-width="1.400"/></svg>
<svg style="left:1998.5px;top:204.5px" width="31" height="31" viewBox="0 0 24 24" fill="none"><path d="M1.500 1.500h8l3 3v11h-11z" fill="#fff" stroke="#3a3a3a" stroke-width="1.400"/><path d="M4 8.500h6M4 11.500h6" stroke="#1e8bcd" stroke-width="1.300"/><path d="M9.500 7.500h8l4 4v11h-12z" fill="#fff" stroke="#3a3a3a" stroke-width="1.400"/><path d="M12 15.500h7M12 18.500h7" stroke="#1e8bcd" stroke-width="1.300"/></svg>
<svg style="left:2044px;top:204.5px" width="31" height="31" viewBox="0 0 24 24" fill="none"><path d="M8 3.500H2.500v17H11" stroke="#ed8733" stroke-width="1.400" fill="#fff"/><path d="M14 3.500h5v6" stroke="#ed8733" stroke-width="1.400"/><path d="M7.500 5V2.500h2.200a1.300 1.300 0 0 1 2.600 0h2.200V5z" fill="#fff" stroke="#3a3a3a" stroke-width="1.200"/><path d="M11.500 11.500h6l4 4v7.500h-10z" fill="#fff" stroke="#3a3a3a" stroke-width="1.400"/></svg>
<svg style="left:2082.2px;top:219.6px" width="11.600" height="6.400" viewBox="0 0 12 6.600"><path d="M0 0h12L6 6.600z" fill="#111"/></svg>
<div style="left:2100.1px;top:209px;width:1.2px;height:24px;background:#cfcfcf;"></div>
<svg style="left:2112px;top:205px" width="30" height="30" viewBox="0 0 24 24" fill="none"><path d="M10.500 1.500h3v8h-3z" fill="#ddd" stroke="#3a3a3a" stroke-width="1.200"/><path d="M5.500 10h13v4.500h-13z" fill="#fff" stroke="#3a3a3a" stroke-width="1.400"/><path d="M5.500 15l-2 8h17l-2-8z" fill="#f8db8f" stroke="#ed8733" stroke-width="1.200"/><path d="M4.500 19.500l14-2" stroke="#fff" stroke-width="1.200"/></svg>
<svg style="left:2156.5px;top:204.5px" width="31" height="31" viewBox="0 0 24 24" fill="none"><path d="M3.500 16L9.500 2h1.500l6 14M5.800 11h9" stroke="#3a3a3a" stroke-width="1.600"/><path d="M1 19h9" stroke="#1e8bcd" stroke-width="1.300"/><path d="M13.500 17.500l6-5.500 3.500 3.500-6 5.500z" fill="#f27d85" stroke="#e63946" stroke-width=".8"/><circle cx="14.500" cy="20" r="2.800" fill="#d62020"/></svg>
<div style="left:2197.4px;top:209px;width:1.2px;height:24px;background:#cfcfcf;"></div>
<svg style="left:2209.5px;top:205.5px" width="29" height="29" viewBox="0 0 24 24" fill="none"><path d="M2 2.500v7.500h7.500" stroke="#c4c4c4" stroke-width="1.500"/><path d="M2.500 10C6 4 14 1 19.500 6c4 4 2 9-8 17" stroke="#c4c4c4" stroke-width="1.500"/></svg>
<svg style="left:2249.2px;top:219.6px" width="11.600" height="6.400" viewBox="0 0 12 6.600"><path d="M0 0h12L6 6.600z" fill="#c4c4c4"/></svg>
<svg style="left:2270.5px;top:205.5px" width="29" height="29" viewBox="0 0 24 24" fill="none"><path d="M22 2.500v7.500h-7.500" stroke="#c4c4c4" stroke-width="1.500"/><path d="M21.500 10C18 4 10 1 4.500 6c-4 4-2 9 8 17" stroke="#c4c4c4" stroke-width="1.500"/></svg>
<svg style="left:2310.2px;top:219.6px" width="11.600" height="6.400" viewBox="0 0 12 6.600"><path d="M0 0h12L6 6.600z" fill="#c4c4c4"/></svg>
<div style="left:2328.1px;top:209px;width:1.2px;height:24px;background:#cfcfcf;"></div>
<svg style="left:2341px;top:204px" width="32" height="32" viewBox="0 0 24 24" fill="none"><circle cx="14" cy="9" r="7.500" fill="#fff" stroke="#3a3a3a" stroke-width="1.300"/><path d="M8.500 14.500L1.500 22" stroke="#3a3a3a" stroke-width="2.400"/><text x="10" y="13" font-family="Liberation Sans" font-size="11.500" fill="#1e8bcd">a</text><text x="16.500" y="23.500" font-family="Liberation Sans" font-size="12" fill="#3a3a3a">d</text></svg>
<svg style="left:2384px;top:201px" width="34" height="34" viewBox="0 0 24 24" fill="none"><text x="0" y="11" font-family="Liberation Sans" font-size="12.500" fill="#3a3a3a" textLength="23">abc</text><path d="M9.500 18l4 4 9.500-9" stroke="#2eb85c" stroke-width="1.800"/></svg>
<div style="left:2426.2px;top:209px;width:1.2px;height:24px;background:#cfcfcf;"></div>
<svg style="left:2437px;top:204px" width="32" height="32" viewBox="0 0 24 24" fill="none"><rect x="1" y="1" width="22" height="22" fill="#fff" stroke="#3a3a3a" stroke-width="1.300"/><path d="M1 6.500h22M1 12h22M1 17.500h22M6.500 1v22M12 1v22M17.500 1v22" stroke="#6b6b6b" stroke-width="1.100"/><rect x="1" y="6.500" width="22" height="5.500" fill="#83beeb" stroke="#1e8bcd" stroke-width="1.200"/><path d="M6.500 6.500v5.500M12 6.500v5.500M17.500 6.500v5.500" stroke="#aad3f2" stroke-width="1"/></svg>
<svg style="left:2477.7px;top:219.6px" width="11.600" height="6.400" viewBox="0 0 12 6.600"><path d="M0 0h12L6 6.600z" fill="#111"/></svg>
<svg style="left:2498px;top:204px" width="32" height="32" viewBox="0 0 24 24" fill="none"><rect x="1" y="1" width="22" height="22" fill="#fff" stroke="#3a3a3a" stroke-width="1.300"/><path d="M1 6.500h22M1 12h22M1 17.500h22M6.500 1v22M12 1v22M17.500 1v22" stroke="#6b6b6b" stroke-width="1.100"/><rect x="6.500" y="1" width="5.500" height="22" fill="#83beeb" stroke="#1e8bcd" stroke-width="1.200"/><path d="M6.500 6.500h5.500M6.500 12h5.500M6.500 17.500h5.500" stroke="#aad3f2" stroke-width="1"/></svg>
<svg style="left:2538.2px;top:219.6px" width="11.600" height="6.400" viewBox="0 0 12 6.600"><path d="M0 0h12L6 6.600z" fill="#111"/></svg>
<div style="left:2555.4px;top:209px;width:1.2px;height:24px;background:#cfcfcf;"></div>
<svg style="left:2566px;top:202.5px" width="35" height="35" viewBox="0 0 24 24" fill="none"><rect x="1" y="1" width="22" height="22" fill="#fff" stroke="#3a3a3a" stroke-width="1.400"/><path d="M1 2.500h22" stroke="#6b6b6b" stroke-width="2"/><path d="M12 3v20" stroke="#6b6b6b" stroke-width="1"/><text x="3" y="13" font-family="Liberation Sans" font-size="11" fill="#1e8bcd">A</text><text x="3.5" y="22" font-family="Liberation Sans" font-size="11" fill="#a933b8">Z</text><text x="14" y="13" font-family="Liberation Sans" font-size="11" fill="#a933b8">Z</text><text x="13.5" y="22" font-family="Liberation Sans" font-size="11" fill="#1e8bcd">A</text></svg>
<svg style="left:2613.5px;top:203.5px" width="33" height="33" viewBox="0 0 24 24" fill="none"><text x="2" y="11" font-family="Liberation Sans" font-size="12.5" fill="#1e8bcd">A</text><text x="2.5" y="23" font-family="Liberation Sans" font-size="12.5" fill="#a933b8">Z</text><path d="M18.500 3v18M14.500 17l4 4.500 4-4.500" stroke="#3a3a3a" stroke-width="1.400"/></svg>
<svg style="left:2658.5px;top:203.5px" width="33" height="33" viewBox="0 0 24 24" fill="none"><text x="2.5" y="11" font-family="Liberation Sans" font-size="12.5" fill="#a933b8">Z</text><text x="2" y="23" font-family="Liberation Sans" font-size="12.5" fill="#1e8bcd">A</text><path d="M18.500 3v18M14.500 17l4 4.500 4-4.500" stroke="#3a3a3a" stroke-width="1.400"/></svg>
<svg style="left:2705px;top:204.5px" width="31" height="31" viewBox="0 0 24 24" fill="none"><path d="M2 2h18c0 4-6 6-7 10v7l-3.500 2.500V12C8.500 8 2 6 2 2z" fill="#fff" stroke="#3a3a3a" stroke-width="1.300"/><path d="M21 10.500l-7 6h4l-6 7 10-8.500h-4z" fill="#f6a04d" stroke="#ed8733" stroke-width=".6"/></svg>
<div style="left:2744px;top:209px;width:1.2px;height:24px;background:#cfcfcf;"></div>
<svg style="left:2756.5px;top:204.5px" width="31" height="31" viewBox="0 0 24 24" fill="none"><rect x="1" y="1.500" width="22" height="21" fill="#fff" stroke="#3a3a3a" stroke-width="1.400"/><circle cx="7" cy="7.500" r="2.300" fill="#f8db8f" stroke="#ed8733"/><path d="M1.500 22l7-8 3 3 5-6 6.500 6.500V22z" fill="#83beeb" stroke="#1e8bcd" stroke-width="1.200"/></svg>
<svg style="left:2801.5px;top:205px" width="30" height="30" viewBox="0 0 24 24" fill="none"><rect x="1.500" y="8" width="5" height="15" fill="#83beeb" stroke="#1e8bcd" stroke-width="1.300"/><rect x="9.500" y="1.500" width="5" height="21.500" fill="#f8db8f" stroke="#ed8733" stroke-width="1.300"/><rect x="17.500" y="11" width="5" height="12" fill="#777" stroke="#3a3a3a" stroke-width="1.300"/></svg>
<svg style="left:2846.5px;top:204.5px" width="31" height="31" viewBox="0 0 24 24" fill="none"><rect x="1" y="1" width="22" height="22" fill="#fff" stroke="#3a3a3a" stroke-width="1.400"/><rect x="3.500" y="3.500" width="3.500" height="3.500" fill="#777"/><path d="M9.500 4.500h11v3" stroke="#777" stroke-width="1.800"/><path d="M5 10v10" stroke="#777" stroke-width="2.200"/><path d="M8 18c8 1 11-3 11-10M8 18l3-3M8 18l3 3M19 8l-3 3M19 8l3 3" stroke="#1e8bcd" stroke-width="1.400"/></svg>
<div style="left:2886.8px;top:209px;width:1.2px;height:24px;background:#cfcfcf;"></div>
<svg style="left:2897.5px;top:204.5px" width="31" height="31" viewBox="0 0 24 24" fill="none"><path d="M1.500 22.500h7v-2C4 18 2.500 14.500 2.500 11 2.500 5.500 6.500 1.500 12 1.500s9.500 4 9.500 9.500c0 3.500-1.500 7-6 9.500v2h7" stroke="#3a3a3a" stroke-width="1.500"/></svg>
<svg style="left:2938.2px;top:219.6px" width="11.600" height="6.400" viewBox="0 0 12 6.600"><path d="M0 0h12L6 6.600z" fill="#111"/></svg>
<svg style="left:2960px;top:203.5px" width="33" height="33" viewBox="0 0 26 26" fill="none"><path d="M3 12a9.500 9.500 0 0 1 19 0z" fill="#fff" stroke="#3a3a3a" stroke-width="1.400"/><path d="M3.500 8.500h18M2.500 12h20M12.500 2.500v11M8 3.500c-2 3-2 6-2 9M17 3.500c2 3 2 6 2 9" stroke="#3a3a3a" stroke-width="1.200"/><rect x="6.500" y="17" width="9" height="6" rx="2.500" fill="#fff" stroke="#1e8bcd" stroke-width="1.400"/><rect x="15.500" y="17" width="9" height="6" rx="2.500" fill="#fff" stroke="#1e8bcd" stroke-width="1.400"/><path d="M12 20h8" stroke="#1e8bcd" stroke-width="1.400"/></svg>
<svg style="left:3036.500px;top:213px" width="17" height="15" viewBox="0 0 17 15" fill="none" stroke="#333" stroke-width="1.600"><path d="M1 1l6 6.500L1 14M9 1l6 6.500L9 14"/></svg>
<svg style="left:3036.500px;top:264.5px" width="17" height="15" viewBox="0 0 17 15" fill="none" stroke="#333" stroke-width="1.600"><path d="M1 1l6 6.500L1 14M9 1l6 6.500L9 14"/></svg>
<div style="left:1612.7px;top:254.2px;width:320.1px;height:34.6px;background:#fff;border-bottom:1.500px solid #8a8a8a;border-top:1px solid #ececec;border-left:1px solid #ececec;"></div><div style="left:1903.8px;top:254.7px;width:29px;height:33.1px;background:#fff;border:1px solid #d9d9d9;border-radius:2px;"></div><svg style="left:1912.3px;top:267.5px" width="12" height="7.199999999999999" viewBox="0 0 12 7" fill="none" stroke="#555" stroke-width="1.3"><path d="M1 1l5 5 5-5"/></svg><span class="t" style="top:262.35px;font-size:20.5px;line-height:20.5px;left:1615.2px;transform:scaleX(0.9898);transform-origin:0 0;">Calibri</span>
<div style="left:1942.8px;top:254.2px;width:100.2px;height:34.6px;background:#fff;border-bottom:1.500px solid #8a8a8a;border-top:1px solid #ececec;border-left:1px solid #ececec;"></div><div style="left:2014px;top:254.7px;width:29px;height:33.1px;background:#fff;border:1px solid #d9d9d9;border-radius:2px;"></div><svg style="left:2022.5px;top:267.5px" width="12" height="7.199999999999999" viewBox="0 0 12 7" fill="none" stroke="#555" stroke-width="1.3"><path d="M1 1l5 5 5-5"/></svg><span class="t" style="top:262.35px;font-size:20.5px;line-height:20.5px;left:1945.3px;transform:scaleX(1.0438);transform-origin:0 0;">11 pt</span>
<div style="left:2047.7px;top:259px;width:1.2px;height:26px;background:#cfcfcf;"></div>
<span class="t" style="top:257.64px;font-size:27px;line-height:27px;font-weight:700;-webkit-text-stroke:.35px;color:#333;left:2065px;transform:scaleX(0.8718);transform-origin:0 0;">B</span>
<span class="t" style="top:257.64px;font-size:27px;line-height:27px;font-style:italic;color:#333;left:2114px;transform:scaleX(1.1);transform-origin:0 0;font-family:'Liberation Serif',serif;">I</span>
<span class="t" style="top:257.49px;font-size:26px;line-height:26px;color:#333;left:2154.5px;transform:scaleX(0.9586);transform-origin:0 0;">U</span>
<div style="left:2154px;top:284.5px;width:19px;height:1.8px;background:#1e8bcd;"></div>
<svg style="left:2188.2px;top:272px" width="11.600" height="6.400" viewBox="0 0 12 6.600"><path d="M0 0h12L6 6.600z" fill="#111"/></svg>
<div style="left:2205.9px;top:259px;width:1.2px;height:26px;background:#cfcfcf;"></div>
<span class="t" style="top:256.61px;font-size:30px;line-height:30px;color:#333;left:2221.99px;transform:scaleX(0.9995);transform-origin:50% 0;">A</span>
<div style="left:2214px;top:284px;width:36px;height:7px;background:#12a537;"></div>
<svg style="left:2257.2px;top:272px" width="11.600" height="6.400" viewBox="0 0 12 6.600"><path d="M0 0h12L6 6.600z" fill="#111"/></svg>
<svg style="left:2275px;top:252px" width="36" height="32" viewBox="0 0 36 32" fill="none"><path d="M5 23V11h5" stroke="#1565c0" stroke-width="2.600"/><path d="M9 12l11-5 5 13-10 5z" fill="#fff" stroke="#3a3a3a" stroke-width="1.300"/><path d="M15.500 9V4a2 2 0 0 1 4 0v7" stroke="#3a3a3a" stroke-width="1.300"/></svg>
<div style="left:2275px;top:284px;width:36px;height:7px;background:#ff8000;"></div>
<svg style="left:2318.6px;top:272px" width="11.600" height="6.400" viewBox="0 0 12 6.600"><path d="M0 0h12L6 6.600z" fill="#111"/></svg>
<div style="left:2336.1px;top:259px;width:1.2px;height:26px;background:#cfcfcf;"></div>
<svg style="left:2350.5px;top:257px" width="28" height="29" viewBox="0 0 28 29" fill="none"><path d="M0 2.0h28" stroke="#3a3a3a" stroke-width="1.500"/><path d="M0 6.7h18" stroke="#3a3a3a" stroke-width="1.500"/><path d="M0 11.4h28" stroke="#3a3a3a" stroke-width="1.500"/><path d="M0 16.1h18" stroke="#3a3a3a" stroke-width="1.500"/><path d="M0 20.8h28" stroke="#3a3a3a" stroke-width="1.500"/><path d="M0 25.5h18" stroke="#3a3a3a" stroke-width="1.500"/></svg>
<svg style="left:2395.7px;top:257px" width="28" height="29" viewBox="0 0 28 29" fill="none"><path d="M0.0 2.0h28" stroke="#3a3a3a" stroke-width="1.500"/><path d="M5.0 6.7h18" stroke="#3a3a3a" stroke-width="1.500"/><path d="M0.0 11.4h28" stroke="#3a3a3a" stroke-width="1.500"/><path d="M5.0 16.1h18" stroke="#3a3a3a" stroke-width="1.500"/><path d="M0.0 20.8h28" stroke="#3a3a3a" stroke-width="1.500"/><path d="M5.0 25.5h18" stroke="#3a3a3a" stroke-width="1.500"/></svg>
<svg style="left:2440.6px;top:257px" width="28" height="29" viewBox="0 0 28 29" fill="none"><path d="M0 2.0h28" stroke="#3a3a3a" stroke-width="1.500"/><path d="M10 6.7h18" stroke="#3a3a3a" stroke-width="1.500"/><path d="M0 11.4h28" stroke="#3a3a3a" stroke-width="1.500"/><path d="M10 16.1h18" stroke="#3a3a3a" stroke-width="1.500"/><path d="M0 20.8h28" stroke="#3a3a3a" stroke-width="1.500"/><path d="M10 25.5h18" stroke="#3a3a3a" stroke-width="1.500"/></svg>
<div style="left:2478.9px;top:259px;width:1.2px;height:26px;background:#cfcfcf;"></div>
<svg style="left:2493px;top:257px" width="29" height="29" viewBox="0 0 24 24" fill="none"><path d="M1 2h22M1 5.500h13M1 9.500h22" stroke="#3a3a3a" stroke-width="1.400"/><path d="M12 23V13M8 16.500l4-4 4 4" stroke="#1e8bcd" stroke-width="1.400"/></svg>
<svg style="left:2538px;top:257px" width="29" height="29" viewBox="0 0 24 24" fill="none"><path d="M12 1v6M8.500 4l3.500 3.500L15.500 4" stroke="#1e8bcd" stroke-width="1.400"/><path d="M1 11h22M1 14.500h13" stroke="#3a3a3a" stroke-width="1.400"/><path d="M12 24v-6M8.500 21l3.500-3.500 3.500 3.500" stroke="#1e8bcd" stroke-width="1.400"/></svg>
<div style="left:2574.3px;top:248.6px;width:44.4px;height:45px;background:#cde6fb;border:1px solid #93c7f3;border-radius:4px;"></div>
<svg style="left:2582px;top:257px" width="29" height="29" viewBox="0 0 24 24" fill="none"><path d="M12 1v10M8 7.500l4 4 4-4" stroke="#1e8bcd" stroke-width="1.400"/><path d="M1 15h13M1 18.500h22M1 22.500h13" stroke="#3a3a3a" stroke-width="1.400"/></svg>
<div style="left:2625.9px;top:259px;width:1.2px;height:26px;background:#cfcfcf;"></div>
<svg style="left:2636px;top:257px" width="29" height="29" viewBox="0 0 24 24" fill="none"><path d="M1 2h22M1 5.500h13M1 11.500h15M1 15.500h7M1 23h22" stroke="#3a3a3a" stroke-width="1.400"/><path d="M11 15.500c8 0 9 1 9 5.500M16.500 18l3.500 3.500 3.500-3.500" stroke="#1e8bcd" stroke-width="1.400"/></svg>
<div style="left:2674.9px;top:259px;width:1.2px;height:26px;background:#cfcfcf;"></div>
<svg style="left:2687.5px;top:256px" width="31" height="31" viewBox="0 0 24 24" fill="none"><rect x="1" y="1" width="22" height="22" fill="#fff" stroke="#3a3a3a" stroke-width="1.400"/><path d="M1 5h22M8 1v4M15.500 1v4M1 19h22M8 19v4M15.500 19v4" stroke="#3a3a3a" stroke-width="1.200"/><rect x="1" y="9" width="22" height="9.500" fill="#fff" stroke="#1565c0" stroke-width="1.500"/><path d="M3 13.700h7M14 13.700h7M5.500 11.500l-2.500 2.200 2.500 2.200M18.500 11.500l2.500 2.200-2.500 2.200" stroke="#1e8bcd" stroke-width="1.400"/></svg>
<svg style="left:2732.5px;top:256px" width="31" height="31" viewBox="0 0 24 24" fill="none"><rect x="1" y="1" width="22" height="22" fill="#fff" stroke="#3a3a3a" stroke-width="1.400"/><path d="M1 5h22M8 1v4M15.500 1v4M1 19h22M8 19v4M15.500 19v4" stroke="#3a3a3a" stroke-width="1.200"/><rect x="1" y="9" width="22" height="9.500" fill="#fff" stroke="#1565c0" stroke-width="1.500"/></svg>
<svg style="left:2777.5px;top:256px" width="31" height="31" viewBox="0 0 24 24" fill="none"><rect x="1" y="1" width="22" height="22" fill="#e0e0e0" stroke="#c4c4c4" stroke-width="1.400"/><path d="M1 5h22M8 1v4M15.500 1v4M1 9h22M1 19h22M8 19v4M15.500 19v4M6 9v10M12 9v10M18 9v10" stroke="#c4c4c4" stroke-width="1.200"/></svg>
<div style="left:2817.7px;top:259px;width:1.2px;height:26px;background:#cfcfcf;"></div>
<svg style="left:2826.5px;top:255.5px" width="36" height="36" viewBox="0 0 28 28" fill="none"><path d="M2 18V4h24v6" stroke="#3a3a3a" stroke-width="1.500"/><circle cx="15" cy="11.500" r="3.300" fill="#3a3a3a"/><g stroke="#3a3a3a" stroke-width="1" fill="#fff"><rect x="7" y="16" width="5.500" height="6.500" rx="1.500"/><rect x="14" y="13.500" width="5.500" height="9" rx="1.500"/><rect x="20.500" y="11" width="5.500" height="11.500" rx="1.500"/></g><path d="M7 19h5.500M14 16.500h5.500M14 19.500h5.500M20.500 14h5.500M20.500 17h5.500M20.500 20h5.500" stroke="#3a3a3a" stroke-width=".9"/></svg>
<svg style="left:2869.9px;top:272px" width="11.600" height="6.400" viewBox="0 0 12 6.600"><path d="M0 0h12L6 6.600z" fill="#111"/></svg>
<span class="t" style="top:255.91px;font-size:32px;line-height:32px;color:#3c3c3c;left:2893.27px;transform:scaleX(0.8786);transform-origin:50% 0;font-weight:400;">%</span>
<span class="t" style="top:255.91px;font-size:32px;line-height:32px;color:#3c3c3c;left:2929.76px;transform:scaleX(0.7644);transform-origin:50% 0;">0.0</span>
<svg style="left:2981.3px;top:254.5px" width="32" height="32" viewBox="0 0 24 24" fill="none"><rect x="1.500" y="4.500" width="21" height="18.500" fill="#fff" stroke="#3a3a3a" stroke-width="1.400"/><path d="M1.500 5.500h21" stroke="#3a3a3a" stroke-width="3"/><path d="M6.500 1.500v4M17.500 1.500v4" stroke="#3a3a3a" stroke-width="2"/><text x="8" y="21" font-family="Liberation Sans" font-size="13" fill="#3a3a3a">7</text></svg>
<div style="left:3021.4px;top:259px;width:1.2px;height:26px;background:#cfcfcf;"></div>
<div style="left:1608px;top:297px;width:1386px;height:44.7px;background:#efefef;"></div>
<div style="left:1612.7px;top:300.3px;width:250px;height:34.2px;background:#fff;border-bottom:1.500px solid #8a8a8a;border-top:1px solid #e3e3e3;border-left:1px solid #e3e3e3;"></div>
<div style="left:1833.7px;top:300.8px;width:29px;height:32.5px;background:#fff;border:1px solid #d9d9d9;border-radius:2px;"></div>
<svg style="left:1842.2px;top:313.5px" width="12" height="7.199999999999999" viewBox="0 0 12 7" fill="none" stroke="#555" stroke-width="1.3"><path d="M1 1l5 5 5-5"/></svg>
<span class="t" style="top:308.65px;font-size:20.5px;line-height:20.5px;left:1615px;transform:scaleX(0.9437);transform-origin:0 0;">A88:XFD88</span>
<div style="left:1868px;top:304px;width:1.2px;height:26px;background:#d5d5d5;"></div>
<span class="t" style="top:304.14px;font-size:27px;line-height:27px;font-style:italic;color:#2a86c8;left:1877px;transform:scaleX(1.15);transform-origin:0 0;font-family:'Liberation Serif',serif;">f</span>
<span class="t" style="top:310.22px;font-size:21px;line-height:21px;font-style:italic;color:#2a86c8;left:1887.5px;transform:scaleX(1.0);transform-origin:0 0;font-family:'Liberation Serif',serif;">x</span>
<svg style="left:1910px;top:305px" width="20" height="25" viewBox="0 0 20 25" fill="none" stroke="#333" stroke-width="1.500"><path d="M18.500 5V1.500h-17l9 11-9 11h17V20"/></svg>
<svg style="left:1939.7px;top:315.8px" width="11.600" height="6.400" viewBox="0 0 12 6.600"><path d="M0 0h12L6 6.600z" fill="#111"/></svg>
<div style="left:1962px;top:311.5px;width:18px;height:2.6px;background:#2b2b2b;"></div>
<div style="left:1962px;top:319px;width:18px;height:2.6px;background:#2b2b2b;"></div>
<div style="left:1987.2px;top:300.3px;width:973.5px;height:34.2px;background:#fff;border:1px solid #c6c6c6;border-bottom:1.300px solid #9a9a9a;"></div>
<span class="t" style="top:308.65px;font-size:20.5px;line-height:20.5px;left:1994px;transform:scaleX(0.9945);transform-origin:0 0;">sekání šlicu v cihle (do šíře 200mm, do hl.50mm)</span>
<svg style="left:2966px;top:313px" width="16.500" height="8.500" viewBox="0 0 16.500 8.500"><path d="M0 0h16.500L8.250 8.500z" fill="#111"/></svg>
<div style="left:1608px;top:341px;width:52.5px;height:30.8px;background:#efefef;border-right:1px solid #bdbdbd;border-bottom:1.300px solid #a6a6a6;"></div>
<div style="left:1660.5px;top:341px;width:1302.5px;height:30.8px;background:#0478d7;border-top:1px solid #6a9fd0;"></div>
<span class="t" style="top:346.4px;font-size:21.5px;line-height:21.5px;font-weight:700;-webkit-text-stroke:.35px;color:#fff;left:2040.79px;transform:scaleX(1.0);transform-origin:50% 0;">A</span>
<span class="t" style="top:346.4px;font-size:21.5px;line-height:21.5px;font-weight:700;-webkit-text-stroke:.35px;color:#fff;left:2523.69px;transform:scaleX(1.0);transform-origin:50% 0;">B</span>
<div style="left:2433px;top:342px;width:1.2px;height:29px;background:#0363b3;"></div>
<span class="t" style="top:346.4px;font-size:21.5px;line-height:21.5px;font-weight:700;-webkit-text-stroke:.35px;color:#fff;left:2683.89px;transform:scaleX(1.0);transform-origin:50% 0;">C</span>
<div style="left:2625.7px;top:342px;width:1.2px;height:29px;background:#0363b3;"></div>
<span class="t" style="top:346.4px;font-size:21.5px;line-height:21.5px;font-weight:700;-webkit-text-stroke:.35px;color:#fff;left:2801.74px;transform:scaleX(1.0);transform-origin:50% 0;">D</span>
<div style="left:2753.4px;top:342px;width:1.2px;height:29px;background:#0363b3;"></div>
<span class="t" style="top:346.4px;font-size:21.5px;line-height:21.5px;font-weight:700;-webkit-text-stroke:.35px;color:#fff;left:2910.83px;transform:scaleX(1.0);transform-origin:50% 0;">E</span>
<div style="left:2861.4px;top:342px;width:1.2px;height:29px;background:#0363b3;"></div>
<div style="left:2963px;top:341px;width:30.2px;height:6.6px;background:#a9a9a9;"></div>
<div style="left:2971px;top:343.8px;width:17px;height:1.3px;background:#1b1b1b;"></div>
<div style="left:1608px;top:371.8px;width:1355px;height:1155px;background:#fff;"></div>
<div style="left:1608px;top:371.8px;width:52.5px;height:33px;background:#dcdcdc;border-right:1.200px solid #a8a8a8;border-bottom:1.200px solid #a8a8a8;"></div>
<span class="t" style="top:379.45px;font-size:20.5px;line-height:20.5px;color:#111;left:1622.8px;transform:scaleX(0.93);transform-origin:50% 0;">59</span>
<div style="left:1660.5px;top:404px;width:1302.5px;height:1px;background:#c6c6c6;"></div>
<span class="t" style="top:376.28px;font-size:24px;line-height:24px;left:1664.2px;transform:scaleX(0.9853);transform-origin:0 0;">broušení sádrové stěrky na stropě</span>
<span class="t" style="top:377.33px;font-size:23px;line-height:23px;left:2532.62px;transform:scaleX(0.9738);transform-origin:100% 0;font-kerning:none;">81,00 Kč</span>
<span class="t" style="top:376.28px;font-size:24px;line-height:24px;left:2673.53px;transform:scaleX(0.983);transform-origin:50% 0;">m2</span>
<div style="left:1608px;top:404.8px;width:52.5px;height:33px;background:#dcdcdc;border-right:1.200px solid #a8a8a8;border-bottom:1.200px solid #a8a8a8;"></div>
<span class="t" style="top:412.45px;font-size:20.5px;line-height:20.5px;color:#111;left:1622.8px;transform:scaleX(0.93);transform-origin:50% 0;">60</span>
<div style="left:1660.5px;top:437px;width:1302.5px;height:1px;background:#c6c6c6;"></div>
<span class="t" style="top:409.28px;font-size:24px;line-height:24px;left:1664.2px;transform:scaleX(0.9793);transform-origin:0 0;">broušení sádrové stěrky na špaletě</span>
<span class="t" style="top:410.33px;font-size:23px;line-height:23px;left:2532.62px;transform:scaleX(0.9738);transform-origin:100% 0;font-kerning:none;">38,00 Kč</span>
<span class="t" style="top:409.28px;font-size:24px;line-height:24px;left:2673.53px;transform:scaleX(0.983);transform-origin:50% 0;"><span class="wv">mb</span></span>
<div style="left:1608px;top:437.8px;width:52.5px;height:33px;background:#dcdcdc;border-right:1.200px solid #a8a8a8;border-bottom:1.200px solid #a8a8a8;"></div>
<span class="t" style="top:445.45px;font-size:20.5px;line-height:20.5px;color:#111;left:1622.8px;transform:scaleX(0.93);transform-origin:50% 0;">61</span>
<div style="left:1660.5px;top:470px;width:1302.5px;height:1px;background:#c6c6c6;"></div>
<span class="t" style="top:442.28px;font-size:24px;line-height:24px;left:1664.2px;transform:scaleX(1.0146);transform-origin:0 0;">penetrace podkladu pod <span class="wv">marmolitovou</span> omítku</span>
<span class="t" style="top:443.33px;font-size:23px;line-height:23px;left:2532.62px;transform:scaleX(0.9738);transform-origin:100% 0;font-kerning:none;">19,00 Kč</span>
<span class="t" style="top:442.28px;font-size:24px;line-height:24px;left:2673.53px;transform:scaleX(0.983);transform-origin:50% 0;">m2</span>
<div style="left:1608px;top:470.8px;width:52.5px;height:33px;background:#dcdcdc;border-right:1.200px solid #a8a8a8;border-bottom:1.200px solid #a8a8a8;"></div>
<span class="t" style="top:478.45px;font-size:20.5px;line-height:20.5px;color:#111;left:1622.8px;transform:scaleX(0.93);transform-origin:50% 0;">62</span>
<div style="left:1660.5px;top:503px;width:1302.5px;height:1px;background:#c6c6c6;"></div>
<span class="t" style="top:475.28px;font-size:24px;line-height:24px;left:1664.2px;transform:scaleX(1.0073);transform-origin:0 0;">natažení <span class="wv">marmolitové</span> omítky</span>
<span class="t" style="top:476.33px;font-size:23px;line-height:23px;left:2519.83px;transform:scaleX(0.9723);transform-origin:100% 0;font-kerning:none;">281,00 Kč</span>
<span class="t" style="top:475.28px;font-size:24px;line-height:24px;left:2673.53px;transform:scaleX(0.983);transform-origin:50% 0;">m2</span>
<div style="left:1608px;top:503.8px;width:52.5px;height:33px;background:#dcdcdc;border-right:1.200px solid #a8a8a8;border-bottom:1.200px solid #a8a8a8;"></div>
<span class="t" style="top:511.45px;font-size:20.5px;line-height:20.5px;color:#111;left:1622.8px;transform:scaleX(0.93);transform-origin:50% 0;">63</span>
<div style="left:1660.5px;top:536px;width:1302.5px;height:1px;background:#c6c6c6;"></div>
<span class="t" style="top:508.28px;font-size:24px;line-height:24px;font-weight:700;-webkit-text-stroke:.35px;left:1664.2px;transform:scaleX(0.9359);transform-origin:0 0;">podlahy</span>
<div style="left:1608px;top:536.8px;width:52.5px;height:33px;background:#dcdcdc;border-right:1.200px solid #a8a8a8;border-bottom:1.200px solid #a8a8a8;"></div>
<span class="t" style="top:544.45px;font-size:20.5px;line-height:20.5px;color:#111;left:1622.8px;transform:scaleX(0.93);transform-origin:50% 0;">64</span>
<div style="left:1660.5px;top:569px;width:1302.5px;height:1px;background:#c6c6c6;"></div>
<span class="t" style="top:541.28px;font-size:24px;line-height:24px;left:1664.2px;transform:scaleX(0.9923);transform-origin:0 0;">vyrovnání podkladu <span class="wv">samonivelační</span> stěrkou do 6mm</span>
<span class="t" style="top:542.33px;font-size:23px;line-height:23px;left:2519.83px;transform:scaleX(0.9723);transform-origin:100% 0;font-kerning:none;">165,00 Kč</span>
<span class="t" style="top:541.28px;font-size:24px;line-height:24px;left:2673.53px;transform:scaleX(0.983);transform-origin:50% 0;">m2</span>
<div style="left:1608px;top:569.8px;width:52.5px;height:33px;background:#dcdcdc;border-right:1.200px solid #a8a8a8;border-bottom:1.200px solid #a8a8a8;"></div>
<span class="t" style="top:577.45px;font-size:20.5px;line-height:20.5px;color:#111;left:1622.8px;transform:scaleX(0.93);transform-origin:50% 0;">65</span>
<div style="left:1660.5px;top:602px;width:1302.5px;height:1px;background:#c6c6c6;"></div>
<span class="t" style="top:574.28px;font-size:24px;line-height:24px;left:1664.2px;transform:scaleX(0.9919);transform-origin:0 0;">vyrovnání podkladu <span class="wv">samonivelační</span> stěrkou do 10mm</span>
<span class="t" style="top:575.33px;font-size:23px;line-height:23px;left:2519.83px;transform:scaleX(0.9723);transform-origin:100% 0;font-kerning:none;">195,00 Kč</span>
<span class="t" style="top:574.28px;font-size:24px;line-height:24px;left:2673.53px;transform:scaleX(0.983);transform-origin:50% 0;">m2</span>
<div style="left:1608px;top:602.8px;width:52.5px;height:33px;background:#dcdcdc;border-right:1.200px solid #a8a8a8;border-bottom:1.200px solid #a8a8a8;"></div>
<span class="t" style="top:610.45px;font-size:20.5px;line-height:20.5px;color:#111;left:1622.8px;transform:scaleX(0.93);transform-origin:50% 0;">66</span>
<div style="left:1660.5px;top:635px;width:1302.5px;height:1px;background:#c6c6c6;"></div>
<span class="t" style="top:607.28px;font-size:24px;line-height:24px;left:1664.2px;transform:scaleX(0.9816);transform-origin:0 0;">pokládka kari sítě na podlahu včetně svázání drátem</span>
<span class="t" style="top:608.33px;font-size:23px;line-height:23px;left:2519.83px;transform:scaleX(0.9723);transform-origin:100% 0;font-kerning:none;">100,00 Kč</span>
<span class="t" style="top:607.28px;font-size:24px;line-height:24px;left:2673.53px;transform:scaleX(0.983);transform-origin:50% 0;">m2</span>
<div style="left:1608px;top:635.8px;width:52.5px;height:33px;background:#dcdcdc;border-right:1.200px solid #a8a8a8;border-bottom:1.200px solid #a8a8a8;"></div>
<span class="t" style="top:643.45px;font-size:20.5px;line-height:20.5px;color:#111;left:1622.8px;transform:scaleX(0.93);transform-origin:50% 0;">67</span>
<div style="left:1660.5px;top:668px;width:1302.5px;height:1px;background:#c6c6c6;"></div>
<span class="t" style="top:640.28px;font-size:24px;line-height:24px;left:1664.2px;transform:scaleX(0.9929);transform-origin:0 0;">pokládka polystyrenu na podlahu (1 vrstva)</span>
<span class="t" style="top:641.33px;font-size:23px;line-height:23px;left:2532.62px;transform:scaleX(0.9738);transform-origin:100% 0;font-kerning:none;">31,00 Kč</span>
<span class="t" style="top:640.28px;font-size:24px;line-height:24px;left:2673.53px;transform:scaleX(0.983);transform-origin:50% 0;">m2</span>
<div style="left:1608px;top:668.8px;width:52.5px;height:33px;background:#dcdcdc;border-right:1.200px solid #a8a8a8;border-bottom:1.200px solid #a8a8a8;"></div>
<span class="t" style="top:676.45px;font-size:20.5px;line-height:20.5px;color:#111;left:1622.8px;transform:scaleX(0.93);transform-origin:50% 0;">68</span>
<div style="left:1660.5px;top:701px;width:1302.5px;height:1px;background:#c6c6c6;"></div>
<span class="t" style="top:673.28px;font-size:24px;line-height:24px;left:1664.2px;transform:scaleX(0.9755);transform-origin:0 0;">pokládka izolace (<span class="wv">IPA</span>) na podlahu včetně svaření</span>
<span class="t" style="top:674.33px;font-size:23px;line-height:23px;left:2519.83px;transform:scaleX(0.9723);transform-origin:100% 0;font-kerning:none;">150,00 Kč</span>
<span class="t" style="top:673.28px;font-size:24px;line-height:24px;left:2673.53px;transform:scaleX(0.983);transform-origin:50% 0;">m2</span>
<div style="left:1608px;top:701.8px;width:52.5px;height:33px;background:#dcdcdc;border-right:1.200px solid #a8a8a8;border-bottom:1.200px solid #a8a8a8;"></div>
<span class="t" style="top:709.45px;font-size:20.5px;line-height:20.5px;color:#111;left:1622.8px;transform:scaleX(0.93);transform-origin:50% 0;">69</span>
<div style="left:1660.5px;top:734px;width:1302.5px;height:1px;background:#c6c6c6;"></div>
<span class="t" style="top:706.28px;font-size:24px;line-height:24px;left:1664.2px;transform:scaleX(0.9967);transform-origin:0 0;">nalepení obvodového dilatačního <span class="wv">mirelonového</span> pásku</span>
<span class="t" style="top:707.33px;font-size:23px;line-height:23px;left:2532.62px;transform:scaleX(0.9738);transform-origin:100% 0;font-kerning:none;">19,00 Kč</span>
<span class="t" style="top:706.28px;font-size:24px;line-height:24px;left:2673.53px;transform:scaleX(0.983);transform-origin:50% 0;"><span class="wv">mb</span></span>
<div style="left:1608px;top:734.8px;width:52.5px;height:33px;background:#dcdcdc;border-right:1.200px solid #a8a8a8;border-bottom:1.200px solid #a8a8a8;"></div>
<span class="t" style="top:742.45px;font-size:20.5px;line-height:20.5px;color:#111;left:1622.8px;transform:scaleX(0.93);transform-origin:50% 0;">70</span>
<div style="left:1660.5px;top:767px;width:1302.5px;height:1px;background:#c6c6c6;"></div>
<span class="t" style="top:739.28px;font-size:24px;line-height:24px;left:1664.2px;transform:scaleX(1.0007);transform-origin:0 0;">betonování podlahy do 30mm</span>
<span class="t" style="top:740.33px;font-size:23px;line-height:23px;left:2519.83px;transform:scaleX(0.9723);transform-origin:100% 0;font-kerning:none;">175,00 Kč</span>
<span class="t" style="top:739.28px;font-size:24px;line-height:24px;left:2673.53px;transform:scaleX(0.983);transform-origin:50% 0;">m2</span>
<div style="left:1608px;top:767.8px;width:52.5px;height:33px;background:#dcdcdc;border-right:1.200px solid #a8a8a8;border-bottom:1.200px solid #a8a8a8;"></div>
<span class="t" style="top:775.45px;font-size:20.5px;line-height:20.5px;color:#111;left:1622.8px;transform:scaleX(0.93);transform-origin:50% 0;">71</span>
<div style="left:1660.5px;top:800px;width:1302.5px;height:1px;background:#c6c6c6;"></div>
<span class="t" style="top:772.28px;font-size:24px;line-height:24px;left:1664.2px;transform:scaleX(1.0007);transform-origin:0 0;">betonování podlahy do 50mm</span>
<span class="t" style="top:773.33px;font-size:23px;line-height:23px;left:2519.83px;transform:scaleX(0.9723);transform-origin:100% 0;font-kerning:none;">225,00 Kč</span>
<span class="t" style="top:772.28px;font-size:24px;line-height:24px;left:2673.53px;transform:scaleX(0.983);transform-origin:50% 0;">m2</span>
<div style="left:1608px;top:800.8px;width:52.5px;height:33px;background:#dcdcdc;border-right:1.200px solid #a8a8a8;border-bottom:1.200px solid #a8a8a8;"></div>
<span class="t" style="top:808.45px;font-size:20.5px;line-height:20.5px;color:#111;left:1622.8px;transform:scaleX(0.93);transform-origin:50% 0;">72</span>
<div style="left:1660.5px;top:833px;width:1302.5px;height:1px;background:#c6c6c6;"></div>
<span class="t" style="top:805.28px;font-size:24px;line-height:24px;left:1664.2px;transform:scaleX(1.0007);transform-origin:0 0;">betonování podlahy do 80mm</span>
<span class="t" style="top:806.33px;font-size:23px;line-height:23px;left:2519.83px;transform:scaleX(0.9723);transform-origin:100% 0;font-kerning:none;">269,00 Kč</span>
<span class="t" style="top:805.28px;font-size:24px;line-height:24px;left:2673.53px;transform:scaleX(0.983);transform-origin:50% 0;">m2</span>
<div style="left:1608px;top:833.8px;width:52.5px;height:33px;background:#dcdcdc;border-right:1.200px solid #a8a8a8;border-bottom:1.200px solid #a8a8a8;"></div>
<span class="t" style="top:841.45px;font-size:20.5px;line-height:20.5px;color:#111;left:1622.8px;transform:scaleX(0.93);transform-origin:50% 0;">73</span>
<div style="left:1660.5px;top:866px;width:1302.5px;height:1px;background:#c6c6c6;"></div>
<span class="t" style="top:838.28px;font-size:24px;line-height:24px;left:1664.2px;transform:scaleX(0.9987);transform-origin:0 0;">betonování podlahy do 100mm</span>
<span class="t" style="top:839.33px;font-size:23px;line-height:23px;left:2519.83px;transform:scaleX(0.9723);transform-origin:100% 0;font-kerning:none;">288,00 Kč</span>
<span class="t" style="top:838.28px;font-size:24px;line-height:24px;left:2673.53px;transform:scaleX(0.983);transform-origin:50% 0;">m2</span>
<div style="left:1608px;top:866.8px;width:52.5px;height:33px;background:#dcdcdc;border-right:1.200px solid #a8a8a8;border-bottom:1.200px solid #a8a8a8;"></div>
<span class="t" style="top:874.45px;font-size:20.5px;line-height:20.5px;color:#111;left:1622.8px;transform:scaleX(0.93);transform-origin:50% 0;">74</span>
<div style="left:1660.5px;top:899px;width:1302.5px;height:1px;background:#c6c6c6;"></div>
<span class="t" style="top:871.28px;font-size:24px;line-height:24px;font-weight:700;-webkit-text-stroke:.35px;left:1664.2px;transform:scaleX(0.937);transform-origin:0 0;">zateplení fasád</span>
<div style="left:1608px;top:899.8px;width:52.5px;height:33px;background:#dcdcdc;border-right:1.200px solid #a8a8a8;border-bottom:1.200px solid #a8a8a8;"></div>
<span class="t" style="top:907.45px;font-size:20.5px;line-height:20.5px;color:#111;left:1622.8px;transform:scaleX(0.93);transform-origin:50% 0;">75</span>
<div style="left:1660.5px;top:932px;width:1302.5px;height:1px;background:#c6c6c6;"></div>
<span class="t" style="top:904.28px;font-size:24px;line-height:24px;left:1664.2px;transform:scaleX(0.9769);transform-origin:0 0;">montáž zakládací lišty pro zateplovací systém</span>
<span class="t" style="top:905.33px;font-size:23px;line-height:23px;left:2532.62px;transform:scaleX(0.9738);transform-origin:100% 0;font-kerning:none;">56,00 Kč</span>
<span class="t" style="top:904.28px;font-size:24px;line-height:24px;left:2673.53px;transform:scaleX(0.983);transform-origin:50% 0;"><span class="wv">mb</span></span>
<div style="left:1608px;top:932.8px;width:52.5px;height:33px;background:#dcdcdc;border-right:1.200px solid #a8a8a8;border-bottom:1.200px solid #a8a8a8;"></div>
<span class="t" style="top:940.45px;font-size:20.5px;line-height:20.5px;color:#111;left:1622.8px;transform:scaleX(0.93);transform-origin:50% 0;">76</span>
<div style="left:1660.5px;top:965px;width:1302.5px;height:1px;background:#c6c6c6;"></div>
<span class="t" style="top:937.28px;font-size:24px;line-height:24px;left:1664.2px;transform:scaleX(0.9955);transform-origin:0 0;">zateplení fasády polystyrenem včetně točené omítky</span>
<span class="t" style="top:938.33px;font-size:23px;line-height:23px;left:2519.83px;transform:scaleX(0.9723);transform-origin:100% 0;font-kerning:none;">556,00 Kč</span>
<span class="t" style="top:937.28px;font-size:24px;line-height:24px;left:2673.53px;transform:scaleX(0.983);transform-origin:50% 0;">m2</span>
<div style="left:1608px;top:965.8px;width:52.5px;height:33px;background:#dcdcdc;border-right:1.200px solid #a8a8a8;border-bottom:1.200px solid #a8a8a8;"></div>
<span class="t" style="top:973.45px;font-size:20.5px;line-height:20.5px;color:#111;left:1622.8px;transform:scaleX(0.93);transform-origin:50% 0;">77</span>
<div style="left:1660.5px;top:998px;width:1302.5px;height:1px;background:#c6c6c6;"></div>
<span class="t" style="top:970.28px;font-size:24px;line-height:24px;left:1664.2px;transform:scaleX(0.9956);transform-origin:0 0;">zateplení fasády minerální vatou včetně točené omítky</span>
<span class="t" style="top:971.33px;font-size:23px;line-height:23px;left:2519.83px;transform:scaleX(0.9723);transform-origin:100% 0;font-kerning:none;">606,00 Kč</span>
<span class="t" style="top:970.28px;font-size:24px;line-height:24px;left:2673.53px;transform:scaleX(0.983);transform-origin:50% 0;">m2</span>
<div style="left:1608px;top:998.8px;width:52.5px;height:33px;background:#dcdcdc;border-right:1.200px solid #a8a8a8;border-bottom:1.200px solid #a8a8a8;"></div>
<span class="t" style="top:1006.45px;font-size:20.5px;line-height:20.5px;color:#111;left:1622.8px;transform:scaleX(0.93);transform-origin:50% 0;">78</span>
<div style="left:1660.5px;top:1031px;width:1302.5px;height:1px;background:#c6c6c6;"></div>
<span class="t" style="top:1003.28px;font-size:24px;line-height:24px;left:1664.2px;transform:scaleX(0.9991);transform-origin:0 0;">zateplení špalety polystyrenem včetně točené omítky</span>
<span class="t" style="top:1004.33px;font-size:23px;line-height:23px;left:2519.83px;transform:scaleX(0.9723);transform-origin:100% 0;font-kerning:none;">381,00 Kč</span>
<span class="t" style="top:1003.28px;font-size:24px;line-height:24px;left:2673.53px;transform:scaleX(0.983);transform-origin:50% 0;"><span class="wv">mb</span></span>
<div style="left:1608px;top:1031.8px;width:52.5px;height:33px;background:#dcdcdc;border-right:1.200px solid #a8a8a8;border-bottom:1.200px solid #a8a8a8;"></div>
<span class="t" style="top:1039.45px;font-size:20.5px;line-height:20.5px;color:#111;left:1622.8px;transform:scaleX(0.93);transform-origin:50% 0;">79</span>
<div style="left:1660.5px;top:1064px;width:1302.5px;height:1px;background:#c6c6c6;"></div>
<span class="t" style="top:1036.28px;font-size:24px;line-height:24px;left:1664.2px;transform:scaleX(0.9992);transform-origin:0 0;">zateplení špalety minerální vatou včetně točené omítky</span>
<span class="t" style="top:1037.33px;font-size:23px;line-height:23px;left:2519.83px;transform:scaleX(0.9723);transform-origin:100% 0;font-kerning:none;">450,00 Kč</span>
<span class="t" style="top:1036.28px;font-size:24px;line-height:24px;left:2673.53px;transform:scaleX(0.983);transform-origin:50% 0;"><span class="wv">mb</span></span>
<div style="left:1608px;top:1064.8px;width:52.5px;height:33px;background:#dcdcdc;border-right:1.200px solid #a8a8a8;border-bottom:1.200px solid #a8a8a8;"></div>
<span class="t" style="top:1072.45px;font-size:20.5px;line-height:20.5px;color:#111;left:1622.8px;transform:scaleX(0.93);transform-origin:50% 0;">80</span>
<div style="left:1660.5px;top:1097px;width:1302.5px;height:1px;background:#c6c6c6;"></div>
<span class="t" style="top:1069.28px;font-size:24px;line-height:24px;left:1664.2px;transform:scaleX(0.9989);transform-origin:0 0;">montáž rohové lišty s perlinkou</span>
<span class="t" style="top:1070.33px;font-size:23px;line-height:23px;left:2532.62px;transform:scaleX(0.9738);transform-origin:100% 0;font-kerning:none;">44,00 Kč</span>
<span class="t" style="top:1069.28px;font-size:24px;line-height:24px;left:2673.53px;transform:scaleX(0.983);transform-origin:50% 0;"><span class="wv">mb</span></span>
<div style="left:1608px;top:1097.8px;width:52.5px;height:33px;background:#dcdcdc;border-right:1.200px solid #a8a8a8;border-bottom:1.200px solid #a8a8a8;"></div>
<span class="t" style="top:1105.45px;font-size:20.5px;line-height:20.5px;color:#111;left:1622.8px;transform:scaleX(0.93);transform-origin:50% 0;">81</span>
<div style="left:1660.5px;top:1130px;width:1302.5px;height:1px;background:#c6c6c6;"></div>
<span class="t" style="top:1102.28px;font-size:24px;line-height:24px;left:1664.2px;transform:scaleX(0.9871);transform-origin:0 0;">montáž <span class="wv">okapničky</span></span>
<span class="t" style="top:1103.33px;font-size:23px;line-height:23px;left:2532.62px;transform:scaleX(0.9738);transform-origin:100% 0;font-kerning:none;">44,00 Kč</span>
<span class="t" style="top:1102.28px;font-size:24px;line-height:24px;left:2673.53px;transform:scaleX(0.983);transform-origin:50% 0;"><span class="wv">mb</span></span>
<div style="left:1608px;top:1130.8px;width:52.5px;height:33px;background:#dcdcdc;border-right:1.200px solid #a8a8a8;border-bottom:1.200px solid #a8a8a8;"></div>
<span class="t" style="top:1138.45px;font-size:20.5px;line-height:20.5px;color:#111;left:1622.8px;transform:scaleX(0.93);transform-origin:50% 0;">82</span>
<div style="left:1660.5px;top:1163px;width:1302.5px;height:1px;background:#c6c6c6;"></div>
<span class="t" style="top:1135.28px;font-size:24px;line-height:24px;left:1664.2px;transform:scaleX(0.9954);transform-origin:0 0;">montáž <span class="wv">apu</span> lišty</span>
<span class="t" style="top:1136.33px;font-size:23px;line-height:23px;left:2532.62px;transform:scaleX(0.9738);transform-origin:100% 0;font-kerning:none;">38,00 Kč</span>
<span class="t" style="top:1135.28px;font-size:24px;line-height:24px;left:2673.53px;transform:scaleX(0.983);transform-origin:50% 0;"><span class="wv">mb</span></span>
<div style="left:1608px;top:1163.8px;width:52.5px;height:33px;background:#dcdcdc;border-right:1.200px solid #a8a8a8;border-bottom:1.200px solid #a8a8a8;"></div>
<span class="t" style="top:1171.45px;font-size:20.5px;line-height:20.5px;color:#111;left:1622.8px;transform:scaleX(0.93);transform-origin:50% 0;">83</span>
<div style="left:1660.5px;top:1196px;width:1302.5px;height:1px;background:#c6c6c6;"></div>
<span class="t" style="top:1168.28px;font-size:24px;line-height:24px;left:1664.2px;transform:scaleX(1.0008);transform-origin:0 0;">přechod barvy omítky</span>
<span class="t" style="top:1169.33px;font-size:23px;line-height:23px;left:2519.83px;transform:scaleX(0.9723);transform-origin:100% 0;font-kerning:none;">181,00 Kč</span>
<span class="t" style="top:1168.28px;font-size:24px;line-height:24px;left:2673.53px;transform:scaleX(0.983);transform-origin:50% 0;"><span class="wv">mb</span></span>
<div style="left:1608px;top:1196.8px;width:52.5px;height:33px;background:#dcdcdc;border-right:1.200px solid #a8a8a8;border-bottom:1.200px solid #a8a8a8;"></div>
<span class="t" style="top:1204.45px;font-size:20.5px;line-height:20.5px;color:#111;left:1622.8px;transform:scaleX(0.93);transform-origin:50% 0;">84</span>
<div style="left:1660.5px;top:1229px;width:1302.5px;height:1px;background:#c6c6c6;"></div>
<span class="t" style="top:1201.28px;font-size:24px;line-height:24px;font-weight:700;-webkit-text-stroke:.35px;left:1664.2px;transform:scaleX(0.9171);transform-origin:0 0;">sekání <span class="wv">šliců</span> (drážek)</span>
<div style="left:1608px;top:1229.8px;width:52.5px;height:33px;background:#dcdcdc;border-right:1.200px solid #a8a8a8;border-bottom:1.200px solid #a8a8a8;"></div>
<span class="t" style="top:1237.45px;font-size:20.5px;line-height:20.5px;color:#111;left:1622.8px;transform:scaleX(0.93);transform-origin:50% 0;">85</span>
<div style="left:1660.5px;top:1262px;width:1302.5px;height:1px;background:#c6c6c6;"></div>
<span class="t" style="top:1234.28px;font-size:24px;line-height:24px;left:1664.2px;transform:scaleX(0.9786);transform-origin:0 0;">sekání <span class="wv">šlicu</span> v cihle (do šíře 30mm, do hl.30mm)</span>
<span class="t" style="top:1235.33px;font-size:23px;line-height:23px;left:2532.62px;transform:scaleX(0.9738);transform-origin:100% 0;font-kerning:none;">65,00 Kč</span>
<span class="t" style="top:1234.28px;font-size:24px;line-height:24px;left:2673.53px;transform:scaleX(0.983);transform-origin:50% 0;"><span class="wv">mb</span></span>
<div style="left:1608px;top:1262.8px;width:52.5px;height:33px;background:#dcdcdc;border-right:1.200px solid #a8a8a8;border-bottom:1.200px solid #a8a8a8;"></div>
<span class="t" style="top:1270.45px;font-size:20.5px;line-height:20.5px;color:#111;left:1622.8px;transform:scaleX(0.93);transform-origin:50% 0;">86</span>
<div style="left:1660.5px;top:1295px;width:1302.5px;height:1px;background:#c6c6c6;"></div>
<span class="t" style="top:1267.28px;font-size:24px;line-height:24px;left:1664.2px;transform:scaleX(0.9786);transform-origin:0 0;">sekání <span class="wv">šlicu</span> v cihle (do šíře 50mm, do hl.50mm)</span>
<span class="t" style="top:1268.33px;font-size:23px;line-height:23px;left:2532.62px;transform:scaleX(0.9738);transform-origin:100% 0;font-kerning:none;">75,00 Kč</span>
<span class="t" style="top:1267.28px;font-size:24px;line-height:24px;left:2673.53px;transform:scaleX(0.983);transform-origin:50% 0;"><span class="wv">mb</span></span>
<div style="left:1608px;top:1295.8px;width:52.5px;height:33px;background:#dcdcdc;border-right:1.200px solid #a8a8a8;border-bottom:1.200px solid #a8a8a8;"></div>
<span class="t" style="top:1303.45px;font-size:20.5px;line-height:20.5px;color:#111;left:1622.8px;transform:scaleX(0.93);transform-origin:50% 0;">87</span>
<span class="t" style="top:1300.28px;font-size:24px;line-height:24px;left:1664.2px;transform:scaleX(0.9795);transform-origin:0 0;">sekání <span class="wv">šlicu</span> v cihle (do šíře 100mm, do hl.50mm)</span>
<span class="t" style="top:1301.33px;font-size:23px;line-height:23px;left:2519.83px;transform:scaleX(0.9723);transform-origin:100% 0;font-kerning:none;">119,00 Kč</span>
<span class="t" style="top:1300.28px;font-size:24px;line-height:24px;left:2673.53px;transform:scaleX(0.983);transform-origin:50% 0;"><span class="wv">mb</span></span>
<div style="left:1660.5px;top:1327.1px;width:1302.5px;height:35.4px;background:#c1dcf3;border-top:1.400px solid #1478d6;border-bottom:1.400px solid #1478d6;box-shadow:inset 0 1px 0 #fff,inset 0 -1px 0 #fff;"></div>
<div style="left:1608px;top:1328.8px;width:52.5px;height:33px;background:#0478d7;border-right:1.200px solid #0478d7;border-bottom:1.200px solid #0478d7;"></div>
<span class="t" style="top:1336.45px;font-size:20.5px;line-height:20.5px;font-weight:700;-webkit-text-stroke:.35px;color:#fff;left:1622.8px;transform:scaleX(0.93);transform-origin:50% 0;">88</span>
<span class="t" style="top:1333.28px;font-size:24px;line-height:24px;left:1664.2px;transform:scaleX(0.9795);transform-origin:0 0;">sekání <span class="wv">šlicu</span> v cihle (do šíře 200mm, do hl.50mm)</span>
<span class="t" style="top:1334.33px;font-size:23px;line-height:23px;left:2519.83px;transform:scaleX(0.9723);transform-origin:100% 0;font-kerning:none;">150,00 Kč</span>
<span class="t" style="top:1333.28px;font-size:24px;line-height:24px;left:2673.53px;transform:scaleX(0.983);transform-origin:50% 0;"><span class="wv">mb</span></span>
<div style="left:1608px;top:1361.8px;width:52.5px;height:33px;background:#dcdcdc;border-right:1.200px solid #a8a8a8;border-bottom:1.200px solid #a8a8a8;"></div>
<span class="t" style="top:1369.45px;font-size:20.5px;line-height:20.5px;color:#111;left:1622.8px;transform:scaleX(0.93);transform-origin:50% 0;">89</span>
<div style="left:1660.5px;top:1394px;width:1302.5px;height:1px;background:#c6c6c6;"></div>
<span class="t" style="top:1366.28px;font-size:24px;line-height:24px;font-weight:700;-webkit-text-stroke:.35px;left:1664.2px;transform:scaleX(0.935);transform-origin:0 0;">zahození a betonování <span class="wv">šliců</span> (drážek)</span>
<div style="left:1608px;top:1394.8px;width:52.5px;height:33px;background:#dcdcdc;border-right:1.200px solid #a8a8a8;border-bottom:1.200px solid #a8a8a8;"></div>
<span class="t" style="top:1402.45px;font-size:20.5px;line-height:20.5px;color:#111;left:1622.8px;transform:scaleX(0.93);transform-origin:50% 0;">90</span>
<div style="left:1660.5px;top:1427px;width:1302.5px;height:1px;background:#c6c6c6;"></div>
<span class="t" style="top:1399.28px;font-size:24px;line-height:24px;left:1664.2px;transform:scaleX(0.9788);transform-origin:0 0;">zahození <span class="wv">šlicu</span> (do šíře 30mm, do hl.30mm)</span>
<span class="t" style="top:1400.33px;font-size:23px;line-height:23px;left:2532.62px;transform:scaleX(0.9738);transform-origin:100% 0;font-kerning:none;">44,00 Kč</span>
<span class="t" style="top:1399.28px;font-size:24px;line-height:24px;left:2673.53px;transform:scaleX(0.983);transform-origin:50% 0;"><span class="wv">mb</span></span>
<div style="left:1608px;top:1427.8px;width:52.5px;height:33px;background:#dcdcdc;border-right:1.200px solid #a8a8a8;border-bottom:1.200px solid #a8a8a8;"></div>
<span class="t" style="top:1435.45px;font-size:20.5px;line-height:20.5px;color:#111;left:1622.8px;transform:scaleX(0.93);transform-origin:50% 0;">91</span>
<div style="left:1660.5px;top:1460px;width:1302.5px;height:1px;background:#c6c6c6;"></div>
<span class="t" style="top:1432.28px;font-size:24px;line-height:24px;left:1664.2px;transform:scaleX(0.9788);transform-origin:0 0;">zahození <span class="wv">šlicu</span> (do šíře 50mm, do hl.50mm)</span>
<span class="t" style="top:1433.33px;font-size:23px;line-height:23px;left:2532.62px;transform:scaleX(0.9738);transform-origin:100% 0;font-kerning:none;">56,00 Kč</span>
<span class="t" style="top:1432.28px;font-size:24px;line-height:24px;left:2673.53px;transform:scaleX(0.983);transform-origin:50% 0;"><span class="wv">mb</span></span>
<div style="left:1608px;top:1460.8px;width:52.5px;height:33px;background:#dcdcdc;border-right:1.200px solid #a8a8a8;border-bottom:1.200px solid #a8a8a8;"></div>
<span class="t" style="top:1468.45px;font-size:20.5px;line-height:20.5px;color:#111;left:1622.8px;transform:scaleX(0.93);transform-origin:50% 0;">92</span>
<div style="left:1660.5px;top:1493px;width:1302.5px;height:1px;background:#c6c6c6;"></div>
<span class="t" style="top:1465.28px;font-size:24px;line-height:24px;left:1664.2px;transform:scaleX(0.9787);transform-origin:0 0;">zahození <span class="wv">šlicu</span> (do šíře 100mm, do hl.50mm)</span>
<span class="t" style="top:1466.33px;font-size:23px;line-height:23px;left:2532.62px;transform:scaleX(0.9738);transform-origin:100% 0;font-kerning:none;">81,00 Kč</span>
<span class="t" style="top:1465.28px;font-size:24px;line-height:24px;left:2673.53px;transform:scaleX(0.983);transform-origin:50% 0;"><span class="wv">mb</span></span>
<div style="left:1608px;top:1493.8px;width:52.5px;height:33px;background:#dcdcdc;border-right:1.200px solid #a8a8a8;border-bottom:1.200px solid #a8a8a8;"></div>
<span class="t" style="top:1501.45px;font-size:20.5px;line-height:20.5px;color:#111;left:1622.8px;transform:scaleX(0.93);transform-origin:50% 0;">93</span>
<div style="left:1660.5px;top:1526px;width:1302.5px;height:1px;background:#c6c6c6;"></div>
<span class="t" style="top:1498.28px;font-size:24px;line-height:24px;left:1664.2px;transform:scaleX(0.9787);transform-origin:0 0;">zahození <span class="wv">šlicu</span> (do šíře 200mm, do hl.50mm)</span>
<span class="t" style="top:1499.33px;font-size:23px;line-height:23px;left:2519.83px;transform:scaleX(0.9723);transform-origin:100% 0;font-kerning:none;">138,00 Kč</span>
<span class="t" style="top:1498.28px;font-size:24px;line-height:24px;left:2673.53px;transform:scaleX(0.983);transform-origin:50% 0;"><span class="wv">mb</span></span>
<div style="left:2433px;top:371.8px;width:1px;height:1153px;background:#c6c6c6;"></div>
<div style="left:2433px;top:1330.3px;width:1px;height:30.5px;background:#a5c0da;"></div>
<div style="left:2626px;top:371.8px;width:1px;height:1153px;background:#c6c6c6;"></div>
<div style="left:2626px;top:1330.3px;width:1px;height:30.5px;background:#a5c0da;"></div>
<div style="left:2754px;top:371.8px;width:1px;height:1153px;background:#c6c6c6;"></div>
<div style="left:2754px;top:1330.3px;width:1px;height:30.5px;background:#a5c0da;"></div>
<div style="left:2862px;top:371.8px;width:1px;height:1153px;background:#c6c6c6;"></div>
<div style="left:2862px;top:1330.3px;width:1px;height:30.5px;background:#a5c0da;"></div>
<div style="left:1660px;top:371.8px;width:1px;height:1153px;background:#a8a8a8;"></div>
<div style="left:2432.6px;top:1330.8px;width:2.4px;height:29.5px;background:#1467cf;"></div>
<div style="left:2963px;top:347.6px;width:30.2px;height:1178px;background:#efefef;"></div>
<div style="left:2976px;top:721px;width:6.5px;height:198px;background:#868686;border-radius:3.300px;"></div>
<div style="left:2992.6px;top:297px;width:1.2px;height:1290px;background:#b5b5b5;"></div>
<div style="left:2993.8px;top:297px;width:60px;height:1290px;background:#efefef;"></div>
<svg style="left:3019.500px;top:309px" width="16" height="12" viewBox="0 0 16 12" stroke="#222" stroke-width="1.300"><path d="M0 1h16M0 6h16M0 11h16"/></svg>
<div style="left:2989.5px;top:905px;width:5.5px;height:74px;background:#2e2e2e;"></div>
<div style="left:2991.2px;top:935px;width:1.2px;height:14px;background:#efefef;"></div>
<svg style="left:3011px;top:342px" width="31" height="31" viewBox="0 0 24 24" fill="none"><rect x="1" y="1" width="22" height="22" fill="#fff" stroke="#3a3a3a" stroke-width="1.400"/><path d="M1 3h22" stroke="#6b6b6b" stroke-width="3"/><path d="M5 11h14M5 16.500h14" stroke="#3a3a3a" stroke-width="1.200"/><rect x="13" y="9" width="3" height="4" fill="#1e8bcd"/><rect x="8" y="14.500" width="3" height="4" fill="#1e8bcd"/></svg>
<svg style="left:3011px;top:385.5px" width="33" height="33" viewBox="0 0 24 24" fill="none"><path d="M1.500 19L8.500 2h1.500l7 17M4.500 12.500h9.500" stroke="#3a3a3a" stroke-width="1.900"/><path d="M22.500 8c-2 1-7 6-9 10l2.500 1.500c3-3 6-8 6.500-11.500z" fill="#fff" stroke="#3a3a3a" stroke-width="1"/><path d="M8.500 23c2-1 3-3 5-4.500l2 1.500c-2 2-4 3-7 3z" fill="#1e8bcd"/></svg>
<svg style="left:3009.5px;top:433.5px" width="34" height="34" viewBox="0 0 24 24" fill="none"><path d="M1 20V2.500h7l2 3h10.500v3" fill="#fff" stroke="#ed8733" stroke-width="1.200"/><path d="M1 20.500l2.500-11.500h20l-2.500 11.500z" fill="#f8db8f" stroke="#ed8733" stroke-width="1.200"/><rect x="10" y="11" width="12" height="11" fill="#fff" stroke="#3a3a3a" stroke-width="1.200"/><circle cx="13.500" cy="14" r="1.200" stroke="#ed8733" stroke-width=".9"/><path d="M10.500 21.500l4-4 2 2 3-3 2.500 2.500v2.500z" fill="#83beeb" stroke="#1e8bcd" stroke-width=".9"/></svg>
<svg style="left:3011px;top:480px" width="31" height="31" viewBox="0 0 24 24" fill="none"><circle cx="12" cy="12" r="10.700" fill="#fff" stroke="#3a3a3a" stroke-width="1.400"/><path d="M17.500 6.500l-3 8-8 3 3-8z" fill="#1e8bcd"/><circle cx="12" cy="12" r="1.600" fill="#fff"/></svg>
<span class="t" style="top:523.37px;font-size:35px;line-height:35px;font-style:italic;color:#2a86c8;left:3009px;transform:scaleX(1.15);transform-origin:0 0;font-family:'Liberation Serif',serif;">f</span>
<span class="t" style="top:529.45px;font-size:29px;line-height:29px;font-style:italic;color:#2a86c8;left:3022px;transform:scaleX(1.0);transform-origin:0 0;font-family:'Liberation Serif',serif;">x</span>
<div style="left:1608px;top:1524.5px;width:1385px;height:62px;background:#efefef;"></div>
<div style="left:1637.4px;top:1536.8px;width:514.4px;height:7.4px;background:#868686;border-radius:3.700px;"></div>
<div style="left:2955.8px;top:1525px;width:7.4px;height:29.5px;background:#a3a3a3;"></div>
<div style="left:2958.8px;top:1531px;width:1.3px;height:17px;background:#111;"></div>
<svg style="left:1620px;top:1558px" width="160" height="28" viewBox="0 0 160 28">
<path d="M4 3v22" stroke="#a9a9a9" stroke-width="1.800"/><path d="M17 3v22L6 14z" fill="#a9a9a9"/>
<path d="M46.500 3v22L35.500 14z" fill="#a9a9a9"/>
<path d="M64.500 3v22l11.500-11z" fill="#111"/>
<path d="M95 3v22l11.500-11z" fill="#111"/><path d="M108.500 3v22" stroke="#111" stroke-width="1.800"/>
<path d="M128 14h23M139.500 2.500v23" stroke="#111" stroke-width="4.600"/></svg>
<div style="left:2134px;top:1555px;width:112px;height:31px;background:#fff;"></div>
<div style="left:2134px;top:1583px;width:112px;height:2.8px;background:#5a5a5a;"></div>
<span class="t" style="top:1561.25px;font-size:20.5px;line-height:20.5px;left:1806.3px;transform:scaleX(1.0241);transform-origin:0 0;">architekti</span>
<span class="t" style="top:1561.25px;font-size:20.5px;line-height:20.5px;left:1938.8px;transform:scaleX(0.9676);transform-origin:0 0;">tesaři</span>
<span class="t" style="top:1561.25px;font-size:20.5px;line-height:20.5px;left:2036.6px;transform:scaleX(1.0034);transform-origin:0 0;">klempíři</span>
<span class="t" style="top:1561.25px;font-size:20.5px;line-height:20.5px;font-weight:700;-webkit-text-stroke:.35px;left:2155px;transform:scaleX(0.9787);transform-origin:0 0;">zedníci</span>
<span class="t" style="top:1561.25px;font-size:20.5px;line-height:20.5px;left:2272.6px;transform:scaleX(1.0059);transform-origin:0 0;">sádrokartonáři</span>
<span class="t" style="top:1561.25px;font-size:20.5px;line-height:20.5px;left:2458.5px;transform:scaleX(1.009);transform-origin:0 0;">elektrikáři</span>
<span class="t" style="top:1561.25px;font-size:20.5px;line-height:20.5px;left:2597.7px;transform:scaleX(1.0145);transform-origin:0 0;">instalatéři</span>
<span class="t" style="top:1561.25px;font-size:20.5px;line-height:20.5px;left:2736.5px;transform:scaleX(1.026);transform-origin:0 0;">topenáři</span>
<span class="t" style="top:1561.25px;font-size:20.5px;line-height:20.5px;left:2861.4px;transform:scaleX(1.0045);transform-origin:0 0;">obkladači</span>
<div style="left:1914.9px;top:1560px;width:1.2px;height:20px;background:#c6c6c6;"></div>
<div style="left:2010px;top:1560px;width:1.2px;height:20px;background:#c6c6c6;"></div>
<div style="left:2132.8px;top:1560px;width:1.2px;height:20px;background:#c6c6c6;"></div>
<div style="left:2430.4px;top:1560px;width:1.2px;height:20px;background:#c6c6c6;"></div>
<div style="left:2572.1px;top:1560px;width:1.2px;height:20px;background:#c6c6c6;"></div>
<div style="left:2710.6px;top:1560px;width:1.2px;height:20px;background:#c6c6c6;"></div>
<div style="left:2836.1px;top:1560px;width:1.2px;height:20px;background:#c6c6c6;"></div>
<div style="left:1608px;top:1585.8px;width:1385.8px;height:1.3px;background:#b9b9b9;"></div>
<div style="left:1608px;top:1587px;width:1446px;height:34px;background:#efefef;"></div>
<svg style="left:1620px;top:1591px" width="23" height="24" viewBox="0 0 23 24" fill="none" stroke="#a3a3a3" stroke-width="1.400"><path d="M1 1h21v22H3.500L1 20.500z"/><path d="M5 1v7.500h13V1M7 23v-7h10v7"/><rect x="9" y="17.500" width="2.500" height="5" fill="#a3a3a3"/></svg>
<div style="left:1649.4px;top:1590.5px;width:1.2px;height:28px;background:#cdcdcd;"></div>
<div style="left:1770.7px;top:1590.5px;width:1.2px;height:28px;background:#cdcdcd;"></div>
<div style="left:2038.7px;top:1590.5px;width:1.2px;height:28px;background:#cdcdcd;"></div>
<div style="left:2125.8px;top:1590.5px;width:1.2px;height:28px;background:#cdcdcd;"></div>
<div style="left:2224.6px;top:1590.5px;width:1.2px;height:28px;background:#cdcdcd;"></div>
<div style="left:2289.7px;top:1590.5px;width:1.2px;height:28px;background:#cdcdcd;"></div>
<div style="left:2330.6px;top:1590.5px;width:1.2px;height:28px;background:#cdcdcd;"></div>
<div style="left:2371.8px;top:1590.5px;width:1.2px;height:28px;background:#cdcdcd;"></div>
<div style="left:2762.7px;top:1590.5px;width:1.2px;height:28px;background:#cdcdcd;"></div>
<div style="left:2974.6px;top:1590.5px;width:1.2px;height:28px;background:#cdcdcd;"></div>
<span class="t" style="top:1595.25px;font-size:20.5px;line-height:20.5px;left:1663.5px;transform:scaleX(0.9632);transform-origin:0 0;">List 4 z 24</span>
<span class="t" style="top:1595.25px;font-size:20.5px;line-height:20.5px;left:1784.3px;transform:scaleX(0.9452);transform-origin:0 0;">PageStyle_zedníci</span>
<span class="t" style="top:1595.25px;font-size:20.5px;line-height:20.5px;left:2050px;transform:scaleX(0.9712);transform-origin:0 0;">Čeština</span>
<div style="left:2238px;top:1598.5px;width:25.6px;height:12.5px;background:#fff;border:1.500px solid #1e8bcd;border-radius:1.500px;"></div>
<svg style="left:2269.500px;top:1594px" width="10" height="23" viewBox="0 0 10 23" fill="none" stroke="#333" stroke-width="1.300"><path d="M1 1h8M1 22h8M5 1v21"/></svg>
<span class="t" style="top:1595.25px;font-size:20.5px;line-height:20.5px;left:2455.8px;transform:scaleX(0.9761);transform-origin:0 0;">Průměr: 150; Součet: 150</span>
<div style="left:2770.6px;top:1602.8px;width:14.4px;height:2.6px;background:#222;"></div>
<div style="left:2788.3px;top:1603.5px;width:166px;height:1.2px;background:#8c8c8c;"></div>
<div style="left:2868.4px;top:1596.5px;width:5.6px;height:15px;background:#efefef;border:1.300px solid #555;"></div>
<div style="left:2957.5px;top:1602.8px;width:14.4px;height:2.6px;background:#222;"></div>
<div style="left:2963.4px;top:1597px;width:2.6px;height:14.4px;background:#222;"></div>
<span class="t" style="top:1595.25px;font-size:20.5px;line-height:20.5px;left:2985.9px;transform:scaleX(0.9463);transform-origin:0 0;">100 %</span>
</div></div>
</body></html>
